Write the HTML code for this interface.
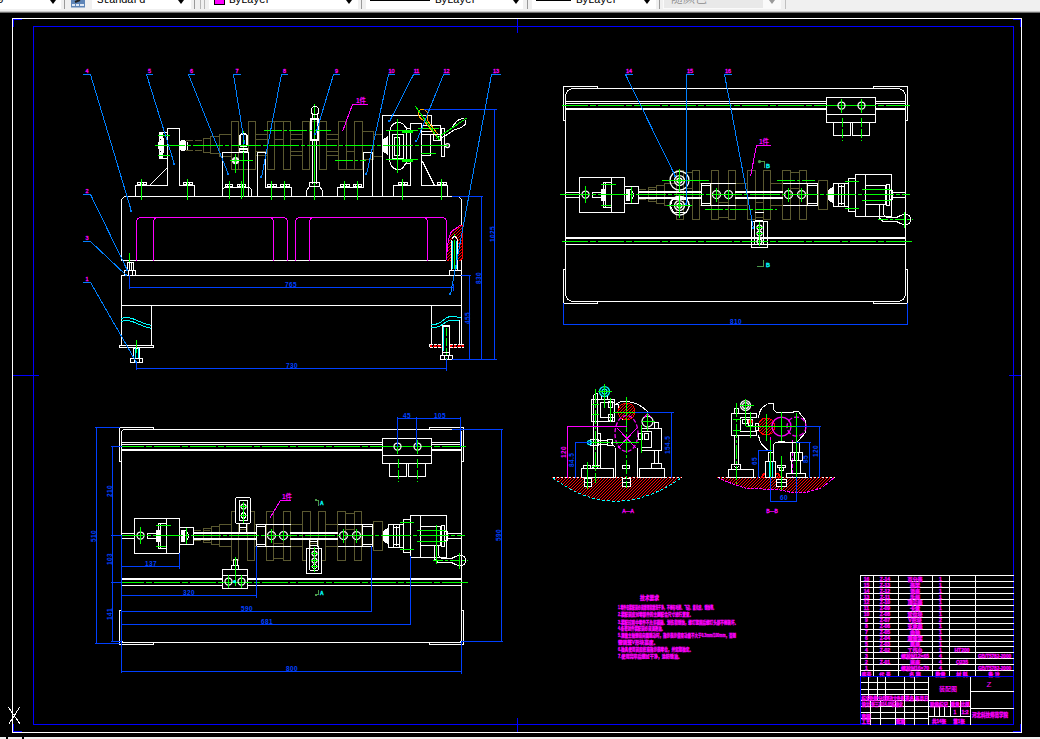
<!DOCTYPE html>
<html lang="zh"><head><meta charset="utf-8"><title>装配图</title>
<style>
html,body{margin:0;padding:0;background:#000;overflow:hidden}
body{width:1040px;height:739px;position:relative;font-family:"Liberation Sans","Noto Sans CJK SC",sans-serif}
#tb{position:absolute;left:0;top:0;width:1040px;height:13px;background:#f0f0f0;overflow:hidden}
#tb .sh1{position:absolute;left:0;top:11px;width:1040px;height:1px;background:#c8c8c8}
#tb .sh2{position:absolute;left:0;top:12px;width:1040px;height:1px;background:#6e6e6e}
.dd{position:absolute;top:0;height:9px;background:#fff;overflow:hidden}
.dd span{position:absolute;top:-7px;font:11px/14px "Liberation Mono","Noto Serif CJK SC",monospace;color:#000;white-space:nowrap;letter-spacing:-.6px}
.dd i{position:absolute;top:0;width:0;height:0;border-left:3.5px solid transparent;border-right:3.5px solid transparent;border-top:4px solid #000}
.sep{position:absolute;top:0;width:1px;height:9px;background:#9a9a9a}
.ln{position:absolute;top:0;height:1px;background:#000}
#bb{position:absolute;left:0;top:737px;width:1040px;height:2px;background:#f0f0f0}
svg{position:absolute;left:0;top:0}
svg text{font-family:"Liberation Sans","Noto Sans CJK SC",sans-serif}
</style></head><body>
<svg width="1040" height="739" viewBox="0 0 1040 739" shape-rendering="crispEdges" fill="none" stroke-width="1">
<defs><pattern id="hr" width="3" height="3" patternUnits="userSpaceOnUse"><rect width="3" height="3" fill="#000"/><path d="M-1 4L4 -1M-1 1L1 -1M2 4L4 2" stroke="#ff0000" stroke-width="1"/></pattern></defs>
<rect x="12.5" y="18.5" width="1009" height="714" stroke="#ffffff" fill="none"/>
<rect x="33.5" y="26.5" width="980" height="698" stroke="#0000ff" fill="none"/>
<line x1="13" y1="375.5" x2="39" y2="375.5" stroke="#0000ff"/>
<line x1="1009" y1="375.5" x2="1021" y2="375.5" stroke="#0000ff"/>
<line x1="517.5" y1="19" x2="517.5" y2="33" stroke="#0000ff"/>
<line x1="517.5" y1="718" x2="517.5" y2="732" stroke="#0000ff"/>
<line x1="13" y1="19.5" x2="22" y2="19.5" stroke="#0000ff"/>
<line x1="13.5" y1="19" x2="13.5" y2="27" stroke="#0000ff"/>
<line x1="1013" y1="19.5" x2="1021" y2="19.5" stroke="#0000ff"/>
<line x1="1020.5" y1="19" x2="1020.5" y2="27" stroke="#0000ff"/>
<line x1="13.5" y1="724" x2="13.5" y2="732" stroke="#0000ff"/>
<line x1="13" y1="731.5" x2="22" y2="731.5" stroke="#0000ff"/>
<line x1="1020.5" y1="724" x2="1020.5" y2="732" stroke="#0000ff"/>
<line x1="1013" y1="731.5" x2="1021" y2="731.5" stroke="#0000ff"/>
<line x1="8.5" y1="707.5" x2="20.5" y2="724.5" stroke="#ffffff"/>
<line x1="19.5" y1="707.5" x2="8.5" y2="724.5" stroke="#ffffff"/>
<line x1="186" y1="140.5" x2="204" y2="140.5" stroke="#5a5830" stroke-dasharray="7 2"/>
<line x1="186" y1="150.5" x2="204" y2="150.5" stroke="#5a5830" stroke-dasharray="7 2"/>
<rect x="203.5" y="138.5" width="7" height="14" stroke="#5a5830" fill="none"/>
<rect x="210.5" y="136.5" width="9" height="17" stroke="#5a5830" fill="none"/>
<rect x="219.5" y="134.5" width="12" height="22" stroke="#5a5830" fill="none"/>
<rect x="231.5" y="121.5" width="7" height="48" stroke="#5a5830" fill="none"/>
<rect x="248.5" y="121.5" width="7" height="48" stroke="#5a5830" fill="none"/>
<rect x="267.5" y="121.5" width="7" height="48" stroke="#5a5830" fill="none"/>
<rect x="283.5" y="121.5" width="7" height="48" stroke="#5a5830" fill="none"/>
<rect x="302.5" y="121.5" width="7" height="48" stroke="#5a5830" fill="none"/>
<rect x="319.5" y="121.5" width="7" height="48" stroke="#5a5830" fill="none"/>
<rect x="338.5" y="121.5" width="8" height="48" stroke="#5a5830" fill="none"/>
<rect x="354.5" y="121.5" width="8" height="48" stroke="#5a5830" fill="none"/>
<line x1="238" y1="151.5" x2="249" y2="151.5" stroke="#5a5830"/>
<line x1="238" y1="169.5" x2="249" y2="169.5" stroke="#5a5830"/>
<line x1="346" y1="151.5" x2="355" y2="151.5" stroke="#5a5830"/>
<line x1="346" y1="169.5" x2="355" y2="169.5" stroke="#5a5830"/>
<line x1="274" y1="121.5" x2="284" y2="121.5" stroke="#5a5830"/>
<line x1="274" y1="139.5" x2="284" y2="139.5" stroke="#5a5830"/>
<line x1="309" y1="121.5" x2="320" y2="121.5" stroke="#5a5830"/>
<line x1="309" y1="139.5" x2="320" y2="139.5" stroke="#5a5830"/>
<line x1="255" y1="134.5" x2="268" y2="134.5" stroke="#5a5830"/>
<line x1="255" y1="139.5" x2="268" y2="139.5" stroke="#5a5830"/>
<line x1="255" y1="151.5" x2="268" y2="151.5" stroke="#5a5830"/>
<line x1="255" y1="155.5" x2="268" y2="155.5" stroke="#5a5830"/>
<line x1="290" y1="134.5" x2="303" y2="134.5" stroke="#5a5830"/>
<line x1="290" y1="139.5" x2="303" y2="139.5" stroke="#5a5830"/>
<line x1="290" y1="151.5" x2="303" y2="151.5" stroke="#5a5830"/>
<line x1="290" y1="155.5" x2="303" y2="155.5" stroke="#5a5830"/>
<line x1="326" y1="134.5" x2="339" y2="134.5" stroke="#5a5830"/>
<line x1="326" y1="139.5" x2="339" y2="139.5" stroke="#5a5830"/>
<line x1="326" y1="151.5" x2="339" y2="151.5" stroke="#5a5830"/>
<line x1="326" y1="155.5" x2="339" y2="155.5" stroke="#5a5830"/>
<rect x="362.5" y="131.5" width="11" height="28" stroke="#5a5830" fill="none"/>
<rect x="373.5" y="134.5" width="9" height="22" stroke="#5a5830" fill="none"/>
<polyline points="121.5,260.5 121.5,199.5 124.5,196.5 458.5,196.5 461.5,199.5 461.5,345.5" stroke="#ffffff" fill="none"/>
<line x1="121" y1="260.5" x2="448" y2="260.5" stroke="#ffffff"/>
<line x1="121" y1="275.5" x2="462" y2="275.5" stroke="#ffffff"/>
<line x1="121.5" y1="275" x2="121.5" y2="346" stroke="#ffffff"/>
<line x1="121" y1="305.5" x2="462" y2="305.5" stroke="#ffffff"/>
<line x1="151.5" y1="305" x2="151.5" y2="346" stroke="#ffffff"/>
<line x1="431.5" y1="305" x2="431.5" y2="346" stroke="#ffffff"/>
<rect x="119.5" y="345.5" width="34" height="2" stroke="#ffffff" fill="none"/>
<path d="M136.5 260.5V222.5Q136.5 217.5 141.5 217.5H282.5Q287.5 217.5 287.5 222.5V260.5" stroke="#ff00ff" fill="none"/>
<path d="M153.5 260.5V222.5Q153.5 217.5 158.5 217.5" stroke="#ff00ff" fill="none"/>
<path d="M273.5 260.5V222.5Q273.5 217.5 268.5 217.5" stroke="#ff00ff" fill="none"/>
<path d="M295.5 260.5V222.5Q295.5 217.5 300.5 217.5H441.5Q446.5 217.5 446.5 222.5V260.5" stroke="#ff00ff" fill="none"/>
<path d="M309.5 260.5V222.5Q309.5 217.5 314.5 217.5" stroke="#ff00ff" fill="none"/>
<path d="M427.5 260.5V222.5Q427.5 217.5 422.5 217.5" stroke="#ff00ff" fill="none"/>
<line x1="129.5" y1="253" x2="129.5" y2="263" stroke="#00ff00"/>
<rect x="127.5" y="262.5" width="6" height="8" stroke="#ffffff" fill="none"/>
<line x1="129.5" y1="262" x2="129.5" y2="271" stroke="#ffffff"/>
<line x1="131.5" y1="262" x2="131.5" y2="271" stroke="#ffffff"/>
<rect x="124.5" y="270.5" width="11" height="5" stroke="#ffffff" fill="none"/>
<line x1="128.5" y1="270" x2="128.5" y2="276" stroke="#ffffff"/>
<line x1="132.5" y1="270" x2="132.5" y2="276" stroke="#ffffff"/>
<path d="M121.5 318.5 Q128 316 136 320 T151.5 325.5" stroke="#00ffff" fill="none"/>
<path d="M121.5 321.5 Q128 319 136 323 T151.5 328.5" stroke="#00ffff" fill="none"/>
<line x1="136.5" y1="340" x2="136.5" y2="353" stroke="#00ff00"/>
<rect x="133.5" y="348.5" width="6" height="10" stroke="#ffffff" fill="none"/>
<line x1="135.5" y1="348" x2="135.5" y2="359" stroke="#00ffff"/>
<line x1="138.5" y1="348" x2="138.5" y2="359" stroke="#00ffff"/>
<rect x="130.5" y="358.5" width="12" height="4" stroke="#ffffff" fill="none"/>
<line x1="134.5" y1="358" x2="134.5" y2="363" stroke="#ffffff"/>
<line x1="139.5" y1="358" x2="139.5" y2="363" stroke="#ffffff"/>
<path d="M446.5 260.5 Q447 245 449.5 236 L451.5 232 L461.5 225 L462.5 226 V258 L460.5 260.5Z" fill="url(#hr)" stroke="#ff0000" stroke-dasharray="2 1"/>
<path d="M446.5 260.5 Q447 245 449.5 236 L451.5 231.5 L461.5 224.5" stroke="#ff00ff" fill="none"/>
<rect x="451.5" y="239.5" width="6" height="31" stroke="#ffffff" fill="#000"/>
<line x1="454.5" y1="234" x2="454.5" y2="269" stroke="#00ff00"/>
<line x1="452.5" y1="241" x2="452.5" y2="269" stroke="#00ffff"/>
<line x1="456.5" y1="241" x2="456.5" y2="269" stroke="#00ffff"/>
<path d="M451.5 239.5 Q454.5 233.5 457.5 239.5" stroke="#ffffff" fill="#000"/>
<rect x="449.5" y="270.5" width="12" height="5" stroke="#ffffff" fill="none"/>
<path d="M431.5 324.5 Q438 325 443 320.5 T452 316.5 L461.5 317.5" stroke="#00ffff" fill="none"/>
<path d="M431.5 327.5 Q438 328 443 324 T452 320.5 L459.5 320.5" stroke="#00ffff" fill="none"/>
<rect x="429.5" y="344.5" width="34" height="3" fill="url(#hr)" stroke="#ffffff" stroke-dasharray="3 1"/>
<line x1="430" y1="345.5" x2="464" y2="345.5" stroke="#ff0000" stroke-dasharray="2 2"/>
<line x1="430" y1="346.5" x2="464" y2="346.5" stroke="#ff0000" stroke-dasharray="2 2"/>
<rect x="442.5" y="325.5" width="7" height="30" stroke="#ffffff" fill="#000"/>
<line x1="442" y1="326.5" x2="450" y2="326.5" stroke="#ffffff"/>
<line x1="443.5" y1="327" x2="443.5" y2="351" stroke="#00ffff"/>
<line x1="446.5" y1="328" x2="446.5" y2="363" stroke="#00ff00" stroke-dasharray="8 2"/>
<line x1="443" y1="352.5" x2="450" y2="352.5" stroke="#ffffff"/>
<rect x="440.5" y="355.5" width="12" height="4" stroke="#ffffff" fill="none"/>
<line x1="444.5" y1="355" x2="444.5" y2="360" stroke="#ffffff"/>
<line x1="448.5" y1="355" x2="448.5" y2="360" stroke="#ffffff"/>
<line x1="459.5" y1="320" x2="459.5" y2="345" stroke="#ffffff"/>
<polyline points="135.5,196.5 135.5,185.5 167.5,185.5 167.5,128.5 179.5,128.5 179.5,185.5 194.5,185.5 194.5,196.5" stroke="#ffffff" fill="none"/>
<line x1="149.5" y1="185.5" x2="167.5" y2="167.5" stroke="#ffffff"/>
<rect x="137.5" y="182.5" width="9" height="2" stroke="#ffffff" fill="none"/>
<line x1="140.5" y1="182" x2="140.5" y2="185" stroke="#ffffff"/>
<line x1="143.5" y1="182" x2="143.5" y2="185" stroke="#ffffff"/>
<rect x="183.5" y="182.5" width="9" height="2" stroke="#ffffff" fill="none"/>
<line x1="186.5" y1="182" x2="186.5" y2="185" stroke="#ffffff"/>
<line x1="189.5" y1="182" x2="189.5" y2="185" stroke="#ffffff"/>
<line x1="141.5" y1="179" x2="141.5" y2="200" stroke="#00ff00"/>
<line x1="187.5" y1="179" x2="187.5" y2="200" stroke="#00ff00"/>
<rect x="159.5" y="132.5" width="8" height="26" stroke="#ffffff" fill="none"/>
<rect x="159.5" y="132.5" width="3" height="6" stroke="#ffffff" fill="#fff"/>
<rect x="159.5" y="152.5" width="3" height="6" stroke="#ffffff" fill="#fff"/>
<rect x="161.5" y="138.5" width="2" height="14" stroke="#ffffff" fill="#fff"/>
<path d="M160.5 140.5 Q155.5 145.5 160.5 150.5Z" fill="#fff" stroke="#fff"/>
<line x1="158" y1="135.5" x2="170" y2="135.5" stroke="#00ff00"/>
<line x1="158" y1="155.5" x2="170" y2="155.5" stroke="#00ff00"/>
<rect x="180.5" y="140.5" width="5" height="10" stroke="#ffffff" fill="#fff" rx="2"/>
<line x1="187.5" y1="142" x2="187.5" y2="150" stroke="#ffffff"/>
<polyline points="222.5,196.5 222.5,152.5 248.5,152.5 248.5,196.5" stroke="#ffffff" fill="none"/>
<polyline points="222.5,196.5 222.5,189.5 224.5,187.5 249.5,187.5 251.5,189.5 251.5,196.5" stroke="#ffffff" fill="none"/>
<rect x="225.5" y="184.5" width="7" height="2" stroke="#ffffff" fill="none"/>
<line x1="227.5" y1="184" x2="227.5" y2="187" stroke="#ffffff"/>
<line x1="229.5" y1="184" x2="229.5" y2="187" stroke="#ffffff"/>
<rect x="237.5" y="184.5" width="8" height="2" stroke="#ffffff" fill="none"/>
<line x1="239.5" y1="184" x2="239.5" y2="187" stroke="#ffffff"/>
<line x1="242.5" y1="184" x2="242.5" y2="187" stroke="#ffffff"/>
<line x1="229.5" y1="181" x2="229.5" y2="199" stroke="#00ff00"/>
<line x1="241.5" y1="181" x2="241.5" y2="199" stroke="#00ff00"/>
<line x1="243.5" y1="131" x2="243.5" y2="197" stroke="#00ff00"/>
<rect x="239.5" y="133.5" width="8" height="13" stroke="#ffffff" fill="none" rx="3"/>
<rect x="240.5" y="134.5" width="6" height="11" stroke="#ffffff" fill="none" rx="2"/>
<rect x="239.5" y="148.5" width="8" height="3" stroke="#ffffff" fill="none"/>
<line x1="239" y1="149.5" x2="248" y2="149.5" stroke="#ffffff"/>
<circle shape-rendering="geometricPrecision" stroke-width="1.25" cx="235.5" cy="160.5" r="3" stroke="#ffffff" fill="none"/>
<circle shape-rendering="geometricPrecision" stroke-width="1.25" cx="235.5" cy="160.5" r="2" stroke="#ffffff" fill="none"/>
<line x1="230" y1="160.5" x2="253" y2="160.5" stroke="#00ff00"/>
<line x1="235.5" y1="154" x2="235.5" y2="173" stroke="#00ff00"/>
<polyline points="257.5,196.5 257.5,152.5 265.5,152.5 265.5,187.5 291.5,187.5 291.5,196.5" stroke="#ffffff" fill="none"/>
<rect x="267.5" y="184.5" width="9" height="2" stroke="#ffffff" fill="none"/>
<line x1="270.5" y1="184" x2="270.5" y2="187" stroke="#ffffff"/>
<line x1="273.5" y1="184" x2="273.5" y2="187" stroke="#ffffff"/>
<rect x="280.5" y="184.5" width="9" height="2" stroke="#ffffff" fill="none"/>
<line x1="283.5" y1="184" x2="283.5" y2="187" stroke="#ffffff"/>
<line x1="286.5" y1="184" x2="286.5" y2="187" stroke="#ffffff"/>
<line x1="271.5" y1="181" x2="271.5" y2="200" stroke="#00ff00"/>
<line x1="284.5" y1="181" x2="284.5" y2="200" stroke="#00ff00"/>
<line x1="314.5" y1="104" x2="314.5" y2="200" stroke="#00ff00"/>
<rect x="311.5" y="106.5" width="7" height="8" stroke="#ffffff" fill="none" rx="3"/>
<line x1="312.5" y1="114" x2="312.5" y2="119" stroke="#ffffff"/>
<line x1="317.5" y1="114" x2="317.5" y2="119" stroke="#ffffff"/>
<rect x="310.5" y="118.5" width="8" height="22" stroke="#ffffff" fill="none"/>
<rect x="311.5" y="119.5" width="6" height="20" stroke="#ffffff" fill="none"/>
<line x1="312.5" y1="140" x2="312.5" y2="184" stroke="#ffffff"/>
<line x1="316.5" y1="140" x2="316.5" y2="184" stroke="#ffffff"/>
<polyline points="306.5,196.5 306.5,190.5 309.5,186.5 309.5,182.5 319.5,182.5 319.5,186.5 322.5,190.5 322.5,196.5" stroke="#ffffff" fill="none"/>
<line x1="309" y1="186.5" x2="320" y2="186.5" stroke="#ffffff"/>
<polyline points="337.5,196.5 337.5,187.5 363.5,187.5 363.5,152.5 372.5,152.5 372.5,196.5" stroke="#ffffff" fill="none"/>
<rect x="340.5" y="184.5" width="9" height="2" stroke="#ffffff" fill="none"/>
<line x1="343.5" y1="184" x2="343.5" y2="187" stroke="#ffffff"/>
<line x1="346.5" y1="184" x2="346.5" y2="187" stroke="#ffffff"/>
<rect x="353.5" y="184.5" width="8" height="2" stroke="#ffffff" fill="none"/>
<line x1="355.5" y1="184" x2="355.5" y2="187" stroke="#ffffff"/>
<line x1="358.5" y1="184" x2="358.5" y2="187" stroke="#ffffff"/>
<line x1="344.5" y1="181" x2="344.5" y2="200" stroke="#00ff00"/>
<line x1="357.5" y1="181" x2="357.5" y2="200" stroke="#00ff00"/>
<polyline points="382.5,196.5 382.5,115.5 431.5,115.5 431.5,125.5" stroke="#ffffff" fill="none"/>
<polyline points="393.5,196.5 393.5,185.5 410.5,185.5 410.5,123.5 421.5,123.5 421.5,185.5 447.5,185.5 447.5,196.5" stroke="#ffffff" fill="none"/>
<rect x="398.5" y="182.5" width="9" height="2" stroke="#ffffff" fill="none"/>
<line x1="401.5" y1="182" x2="401.5" y2="185" stroke="#ffffff"/>
<line x1="404.5" y1="182" x2="404.5" y2="185" stroke="#ffffff"/>
<rect x="437.5" y="182.5" width="9" height="2" stroke="#ffffff" fill="none"/>
<line x1="440.5" y1="182" x2="440.5" y2="185" stroke="#ffffff"/>
<line x1="443.5" y1="182" x2="443.5" y2="185" stroke="#ffffff"/>
<line x1="402.5" y1="179" x2="402.5" y2="200" stroke="#00ff00"/>
<line x1="441.5" y1="179" x2="441.5" y2="200" stroke="#00ff00"/>
<polyline points="421.5,125.5 440.5,125.5 440.5,134.5 421.5,134.5" stroke="#ffffff" fill="none"/>
<polyline points="430.5,134.5 430.5,155.5 421.5,155.5" stroke="#ffffff" fill="none"/>
<line x1="421" y1="131.5" x2="434" y2="131.5" stroke="#ffffff"/>
<line x1="422.5" y1="161.5" x2="434.5" y2="185.5" stroke="#ffffff"/>
<rect x="441.5" y="128.5" width="3" height="28" stroke="#ffffff" fill="none"/>
<circle shape-rendering="geometricPrecision" stroke-width="1.25" cx="447.5" cy="145.5" r="2" stroke="#ffffff" fill="none"/>
<path d="M389.5 135 Q389.5 123 398 122.5 Q403 122.5 404.5 126 L406.5 128 V163 L404.5 165 Q403 169.5 398 169.5 Q389.5 169 389.5 157Z" stroke="#ffffff" fill="none"/>
<rect x="392.5" y="134.5" width="11" height="24" stroke="#ffffff" fill="none"/>
<rect x="394.5" y="137.5" width="5" height="18" stroke="#ffffff" fill="none"/>
<line x1="406" y1="128.5" x2="411" y2="128.5" stroke="#ffffff"/>
<line x1="406" y1="163.5" x2="411" y2="163.5" stroke="#ffffff"/>
<path d="M383.5 139.5 L387.5 137 V154 L383.5 151.5Z" fill="#fff" stroke="#fff"/>
<line x1="397.5" y1="119" x2="397.5" y2="173" stroke="#00ff00"/>
<line x1="386" y1="130.5" x2="418" y2="130.5" stroke="#00ff00"/>
<line x1="386" y1="159.5" x2="418" y2="159.5" stroke="#00ff00"/>
<line x1="402" y1="131.5" x2="413" y2="131.5" stroke="#00ff00" stroke-width="3"/>
<line x1="402" y1="160.5" x2="413" y2="160.5" stroke="#00ff00" stroke-width="3"/>
<line x1="418" y1="128.5" x2="439" y2="128.5" stroke="#00ff00"/>
<line x1="421" y1="153.5" x2="436" y2="153.5" stroke="#00ff00"/>
<path d="M437.5 137.5 L452 128 Q456 120 462 118.5 Q467 119 465.5 124 Q462 128 455 129.5 L439.5 139.5" stroke="#ffffff" fill="none"/>
<line x1="436.5" y1="138.5" x2="467.5" y2="117.5" stroke="#00ff00"/>
<path d="M436.5 136.5 L424 121 Q416.5 116 418.5 111 Q422 107 427 111.5 Q428.5 117 427 120 L438.5 135" stroke="#ffa500" fill="none"/>
<line x1="415.5" y1="106.5" x2="440.5" y2="141.5" stroke="#00ff00"/>
<rect x="433.5" y="134.5" width="7" height="6" stroke="#ffffff" fill="none"/>
<line x1="155" y1="145.5" x2="448" y2="145.5" stroke="#00ff00" stroke-dasharray="30 2 4 2"/>
<line x1="264" y1="130.5" x2="331" y2="130.5" stroke="#00ff00" stroke-dasharray="18 2 3 2"/>
<line x1="335" y1="160.5" x2="366" y2="160.5" stroke="#00ff00" stroke-dasharray="18 2 3 2"/>
<line x1="424" y1="109.5" x2="497" y2="109.5" stroke="#0040ff"/>
<line x1="494.5" y1="109" x2="494.5" y2="360" stroke="#0040ff"/>
<line x1="452" y1="196.5" x2="483" y2="196.5" stroke="#0040ff"/>
<line x1="481.5" y1="196" x2="481.5" y2="360" stroke="#0040ff"/>
<line x1="469.5" y1="275" x2="469.5" y2="360" stroke="#0040ff"/>
<line x1="461" y1="275.5" x2="471" y2="275.5" stroke="#0040ff"/>
<line x1="452" y1="359.5" x2="497" y2="359.5" stroke="#0040ff"/>
<line x1="129" y1="287.5" x2="454" y2="287.5" stroke="#0040ff"/>
<line x1="129.5" y1="275" x2="129.5" y2="289" stroke="#0040ff"/>
<line x1="453.5" y1="284" x2="453.5" y2="291" stroke="#0040ff"/>
<line x1="136" y1="368.5" x2="447" y2="368.5" stroke="#0040ff"/>
<line x1="136.5" y1="362" x2="136.5" y2="370" stroke="#0040ff"/>
<line x1="446.5" y1="359" x2="446.5" y2="371" stroke="#0040ff"/>
<text x="285" y="287" fill="#0040ff" font-size="6.5" font-weight="bold" letter-spacing="0.4">765</text>
<text x="286" y="368" fill="#0040ff" font-size="6.5" font-weight="bold" letter-spacing="0.4">730</text>
<text x="495" y="242" fill="#0040ff" font-size="6.5" transform="rotate(-90 495 242)" font-weight="bold" letter-spacing="0.4">1025</text>
<text x="481" y="284" fill="#0040ff" font-size="6.5" transform="rotate(-90 481 284)" font-weight="bold" letter-spacing="0.4">830</text>
<text x="470" y="324" fill="#0040ff" font-size="6.5" transform="rotate(-90 470 324)" font-weight="bold" letter-spacing="0.4">455</text>
<line x1="83" y1="74.5" x2="91" y2="74.5" stroke="#0080ff"/>
<line x1="90.5" y1="74.5" x2="131.5" y2="211.5" stroke="#0080ff"/>
<rect x="130.5" y="210.5" width="1" height="1" stroke="#0080ff" fill="#0080ff"/>
<text x="87" y="73" fill="#ff00ff" font-size="5.5" text-anchor="middle" stroke="#ff00ff" stroke-width="0.3">4</text>
<line x1="146" y1="74.5" x2="153" y2="74.5" stroke="#0080ff"/>
<line x1="146.5" y1="74.5" x2="174.5" y2="164.5" stroke="#0080ff"/>
<rect x="173.5" y="163.5" width="1" height="1" stroke="#0080ff" fill="#0080ff"/>
<text x="149.5" y="73" fill="#ff00ff" font-size="5.5" text-anchor="middle" stroke="#ff00ff" stroke-width="0.3">5</text>
<line x1="188" y1="74.5" x2="195" y2="74.5" stroke="#0080ff"/>
<line x1="188.5" y1="74.5" x2="228.5" y2="174.5" stroke="#0080ff"/>
<rect x="227.5" y="173.5" width="1" height="1" stroke="#0080ff" fill="#0080ff"/>
<text x="191.5" y="73" fill="#ff00ff" font-size="5.5" text-anchor="middle" stroke="#ff00ff" stroke-width="0.3">6</text>
<line x1="233" y1="74.5" x2="241" y2="74.5" stroke="#0080ff"/>
<line x1="233.5" y1="74.5" x2="244.5" y2="143.5" stroke="#0080ff"/>
<rect x="243.5" y="142.5" width="1" height="1" stroke="#0080ff" fill="#0080ff"/>
<text x="237" y="73" fill="#ff00ff" font-size="5.5" text-anchor="middle" stroke="#ff00ff" stroke-width="0.3">7</text>
<line x1="281" y1="74.5" x2="288" y2="74.5" stroke="#0080ff"/>
<line x1="281.5" y1="74.5" x2="261.5" y2="177.5" stroke="#0080ff"/>
<rect x="260.5" y="176.5" width="1" height="1" stroke="#0080ff" fill="#0080ff"/>
<text x="284.5" y="73" fill="#ff00ff" font-size="5.5" text-anchor="middle" stroke="#ff00ff" stroke-width="0.3">8</text>
<line x1="333" y1="74.5" x2="340" y2="74.5" stroke="#0080ff"/>
<line x1="333.5" y1="74.5" x2="315.5" y2="134.5" stroke="#0080ff"/>
<rect x="314.5" y="133.5" width="1" height="1" stroke="#0080ff" fill="#0080ff"/>
<text x="336.5" y="73" fill="#ff00ff" font-size="5.5" text-anchor="middle" stroke="#ff00ff" stroke-width="0.3">9</text>
<line x1="388" y1="74.5" x2="395" y2="74.5" stroke="#0080ff"/>
<line x1="388.5" y1="74.5" x2="366.5" y2="174.5" stroke="#0080ff"/>
<rect x="365.5" y="173.5" width="1" height="1" stroke="#0080ff" fill="#0080ff"/>
<text x="391.5" y="73" fill="#ff00ff" font-size="5.5" text-anchor="middle" stroke="#ff00ff" stroke-width="0.3">10</text>
<line x1="413" y1="74.5" x2="420" y2="74.5" stroke="#0080ff"/>
<line x1="413.5" y1="74.5" x2="389.5" y2="121.5" stroke="#0080ff"/>
<rect x="388.5" y="120.5" width="1" height="1" stroke="#0080ff" fill="#0080ff"/>
<text x="416.5" y="73" fill="#ff00ff" font-size="5.5" text-anchor="middle" stroke="#ff00ff" stroke-width="0.3">11</text>
<line x1="443" y1="74.5" x2="450" y2="74.5" stroke="#0080ff"/>
<line x1="443.5" y1="74.5" x2="416.5" y2="141.5" stroke="#0080ff"/>
<rect x="415.5" y="140.5" width="1" height="1" stroke="#0080ff" fill="#0080ff"/>
<text x="446.5" y="73" fill="#ff00ff" font-size="5.5" text-anchor="middle" stroke="#ff00ff" stroke-width="0.3">12</text>
<line x1="491" y1="74.5" x2="501" y2="74.5" stroke="#0080ff"/>
<line x1="491.5" y1="74.5" x2="450.5" y2="294.5" stroke="#0080ff"/>
<rect x="449.5" y="293.5" width="1" height="1" stroke="#0080ff" fill="#0080ff"/>
<text x="496" y="73" fill="#ff00ff" font-size="5.5" text-anchor="middle" stroke="#ff00ff" stroke-width="0.3">13</text>
<line x1="83" y1="194.5" x2="91" y2="194.5" stroke="#0080ff"/>
<line x1="90.5" y1="194.5" x2="127.5" y2="270.5" stroke="#0080ff"/>
<rect x="126.5" y="269.5" width="1" height="1" stroke="#0080ff" fill="#0080ff"/>
<text x="87" y="193" fill="#ff00ff" font-size="5.5" text-anchor="middle" stroke="#ff00ff" stroke-width="0.3">2</text>
<line x1="83" y1="241.5" x2="91" y2="241.5" stroke="#0080ff"/>
<line x1="90.5" y1="241.5" x2="126.5" y2="275.5" stroke="#0080ff"/>
<rect x="125.5" y="274.5" width="1" height="1" stroke="#0080ff" fill="#0080ff"/>
<text x="87" y="240" fill="#ff00ff" font-size="5.5" text-anchor="middle" stroke="#ff00ff" stroke-width="0.3">3</text>
<line x1="83" y1="282.5" x2="91" y2="282.5" stroke="#0080ff"/>
<line x1="90.5" y1="282.5" x2="136.5" y2="362.5" stroke="#0080ff"/>
<rect x="135.5" y="361.5" width="1" height="1" stroke="#0080ff" fill="#0080ff"/>
<text x="87" y="281" fill="#ff00ff" font-size="5.5" text-anchor="middle" stroke="#ff00ff" stroke-width="0.3">1</text>
<line x1="352" y1="104.5" x2="368" y2="104.5" stroke="#ff00ff"/>
<line x1="352.5" y1="104.5" x2="342.5" y2="131.5" stroke="#ff00ff"/>
<text x="356" y="103" fill="#ff00ff" font-size="6.5" font-weight="bold">1件</text>
<line x1="639" y1="189.5" x2="657" y2="189.5" stroke="#5a5830" stroke-dasharray="7 2"/>
<line x1="639" y1="199.5" x2="657" y2="199.5" stroke="#5a5830" stroke-dasharray="7 2"/>
<rect x="648.5" y="187.5" width="8" height="14" stroke="#5a5830" fill="none"/>
<rect x="656.5" y="185.5" width="8" height="18" stroke="#5a5830" fill="none"/>
<rect x="664.5" y="183.5" width="12" height="22" stroke="#5a5830" fill="none"/>
<rect x="676.5" y="170.5" width="7" height="49" stroke="#5a5830" fill="none"/>
<rect x="692.5" y="170.5" width="7" height="49" stroke="#5a5830" fill="none"/>
<rect x="711.5" y="170.5" width="7" height="49" stroke="#5a5830" fill="none"/>
<rect x="728.5" y="170.5" width="7" height="49" stroke="#5a5830" fill="none"/>
<rect x="747.5" y="170.5" width="8" height="49" stroke="#5a5830" fill="none"/>
<rect x="763.5" y="170.5" width="7" height="49" stroke="#5a5830" fill="none"/>
<rect x="782.5" y="170.5" width="8" height="49" stroke="#5a5830" fill="none"/>
<rect x="799.5" y="170.5" width="7" height="49" stroke="#5a5830" fill="none"/>
<line x1="683" y1="172.5" x2="693" y2="172.5" stroke="#5a5830"/>
<line x1="683" y1="188.5" x2="693" y2="188.5" stroke="#5a5830"/>
<line x1="790" y1="172.5" x2="800" y2="172.5" stroke="#5a5830"/>
<line x1="790" y1="188.5" x2="800" y2="188.5" stroke="#5a5830"/>
<line x1="718" y1="202.5" x2="729" y2="202.5" stroke="#5a5830"/>
<line x1="718" y1="217.5" x2="729" y2="217.5" stroke="#5a5830"/>
<line x1="755" y1="202.5" x2="764" y2="202.5" stroke="#5a5830"/>
<line x1="755" y1="217.5" x2="764" y2="217.5" stroke="#5a5830"/>
<line x1="699" y1="183.5" x2="712" y2="183.5" stroke="#5a5830"/>
<line x1="699" y1="205.5" x2="712" y2="205.5" stroke="#5a5830"/>
<line x1="735" y1="183.5" x2="748" y2="183.5" stroke="#5a5830"/>
<line x1="735" y1="205.5" x2="748" y2="205.5" stroke="#5a5830"/>
<line x1="770" y1="183.5" x2="783" y2="183.5" stroke="#5a5830"/>
<line x1="770" y1="205.5" x2="783" y2="205.5" stroke="#5a5830"/>
<rect x="818.5" y="180.5" width="9" height="29" stroke="#5a5830" fill="none"/>
<polyline points="597.5,88.5 597.5,86.5 563.5,86.5 563.5,120.5 565.5,120.5" stroke="#ffffff" fill="none"/>
<path d="M565.5 292.5V97.5Q565.5 88.5 574.5 88.5H896.5Q905.5 88.5 905.5 97.5V292.5" stroke="#ffffff" fill="none"/>
<polyline points="873.5,88.5 873.5,86.5 907.5,86.5 907.5,120.5 905.5,120.5" stroke="#ffffff" fill="none"/>
<path d="M565.5 292.5Q565.5 301.5 574.5 301.5H896.5Q905.5 301.5 905.5 292.5" stroke="#ffffff" fill="none"/>
<polyline points="565.5,269.5 563.5,269.5 563.5,303.5 597.5,303.5 597.5,301.5" stroke="#ffffff" fill="none"/>
<polyline points="905.5,269.5 907.5,269.5 907.5,303.5 873.5,303.5 873.5,301.5" stroke="#ffffff" fill="none"/>
<line x1="566" y1="101.5" x2="906" y2="101.5" stroke="#ffffff"/>
<line x1="566" y1="103.5" x2="906" y2="103.5" stroke="#ffffff"/>
<line x1="566" y1="108.5" x2="906" y2="108.5" stroke="#ffffff"/>
<line x1="566" y1="109.5" x2="906" y2="109.5" stroke="#ffffff"/>
<line x1="562" y1="105.5" x2="910" y2="105.5" stroke="#00ff00" stroke-dasharray="26 2 6 2"/>
<line x1="566" y1="237.5" x2="906" y2="237.5" stroke="#ffffff"/>
<line x1="566" y1="238.5" x2="906" y2="238.5" stroke="#ffffff"/>
<line x1="566" y1="244.5" x2="906" y2="244.5" stroke="#ffffff"/>
<line x1="562" y1="241.5" x2="913" y2="241.5" stroke="#00ff00" stroke-dasharray="26 2 6 2"/>
<line x1="639" y1="192.5" x2="702" y2="192.5" stroke="#ffffff"/>
<line x1="639" y1="197.5" x2="702" y2="197.5" stroke="#ffffff"/>
<line x1="735" y1="192.5" x2="783" y2="192.5" stroke="#ffffff"/>
<line x1="735" y1="197.5" x2="783" y2="197.5" stroke="#ffffff"/>
<line x1="566" y1="192.5" x2="580" y2="192.5" stroke="#ffffff"/>
<line x1="566" y1="197.5" x2="580" y2="197.5" stroke="#ffffff"/>
<line x1="891" y1="192.5" x2="906" y2="192.5" stroke="#ffffff"/>
<line x1="891" y1="197.5" x2="906" y2="197.5" stroke="#ffffff"/>
<line x1="639" y1="191.5" x2="702" y2="191.5" stroke="#ffffff"/>
<line x1="735" y1="191.5" x2="783" y2="191.5" stroke="#ffffff"/>
<line x1="639" y1="198.5" x2="702" y2="198.5" stroke="#ffffff"/>
<line x1="735" y1="198.5" x2="783" y2="198.5" stroke="#ffffff"/>
<rect x="579.5" y="177.5" width="45" height="35" stroke="#ffffff" fill="none"/>
<line x1="611.5" y1="177" x2="611.5" y2="213" stroke="#ffffff"/>
<circle shape-rendering="geometricPrecision" stroke-width="1.25" cx="585.5" cy="194.5" r="3.5" stroke="#ffffff" fill="none"/>
<line x1="585" y1="194.5" x2="586" y2="194.5" stroke="#00ff00"/>
<line x1="585.5" y1="186" x2="585.5" y2="203" stroke="#00ff00"/>
<rect x="592.5" y="192.5" width="9" height="5" stroke="#ffffff" fill="none"/>
<polyline points="611.5,182.5 603.5,182.5 603.5,207.5 611.5,207.5" stroke="#ffffff" fill="none"/>
<line x1="605.5" y1="182" x2="605.5" y2="208" stroke="#ffffff"/>
<rect x="601.5" y="189.5" width="3" height="11" stroke="#ffffff" fill="#fff"/>
<line x1="601" y1="184.5" x2="616" y2="184.5" stroke="#00ff00"/>
<line x1="601" y1="205.5" x2="611" y2="205.5" stroke="#00ff00"/>
<polyline points="624.5,186.5 638.5,186.5 638.5,203.5 624.5,203.5" stroke="#ffffff" fill="none"/>
<path d="M630.5 189.5 Q636.5 194.5 630.5 200.5" stroke="#ffffff" fill="none"/>
<rect x="626.5" y="189.5" width="3" height="11" stroke="#ffffff" fill="#fff"/>
<line x1="631.5" y1="187" x2="631.5" y2="203" stroke="#00ff00"/>
<circle shape-rendering="geometricPrecision" stroke-width="1.25" cx="679.5" cy="180.5" r="9.5" stroke="#ffffff" fill="none"/>
<circle shape-rendering="geometricPrecision" stroke-width="1.25" cx="679.5" cy="180.5" r="5" stroke="#ffffff" fill="none"/>
<circle shape-rendering="geometricPrecision" stroke-width="1.25" cx="679.5" cy="180.5" r="2.5" stroke="#ffffff" fill="none"/>
<circle shape-rendering="geometricPrecision" stroke-width="1.25" cx="679.5" cy="180.5" r="1" stroke="#00ff00" fill="#00ff00"/>
<circle shape-rendering="geometricPrecision" stroke-width="1.25" cx="679.5" cy="205.5" r="9.5" stroke="#ffffff" fill="none"/>
<circle shape-rendering="geometricPrecision" stroke-width="1.25" cx="679.5" cy="205.5" r="5" stroke="#ffffff" fill="none"/>
<circle shape-rendering="geometricPrecision" stroke-width="1.25" cx="679.5" cy="205.5" r="2.5" stroke="#ffffff" fill="none"/>
<circle shape-rendering="geometricPrecision" stroke-width="1.25" cx="679.5" cy="205.5" r="1" stroke="#00ff00" fill="#00ff00"/>
<polygon points="672.5,199.5 687.5,199.5 689.5,205.5 686.5,212.5 673.5,212.5 670.5,205.5" stroke="#ffffff" fill="none"/>
<line x1="662" y1="180.5" x2="709" y2="180.5" stroke="#00ff00"/>
<line x1="679.5" y1="169" x2="679.5" y2="192" stroke="#00ff00"/>
<line x1="667" y1="205.5" x2="692" y2="205.5" stroke="#00ff00"/>
<line x1="679.5" y1="195" x2="679.5" y2="218" stroke="#00ff00"/>
<rect x="701.5" y="183.5" width="9" height="22" stroke="#ffffff" fill="none"/>
<line x1="701" y1="185.5" x2="711" y2="185.5" stroke="#ffffff"/>
<line x1="701" y1="203.5" x2="711" y2="203.5" stroke="#ffffff"/>
<line x1="710" y1="183.5" x2="736" y2="183.5" stroke="#ffffff"/>
<line x1="710" y1="205.5" x2="736" y2="205.5" stroke="#ffffff"/>
<line x1="710.5" y1="183" x2="710.5" y2="206" stroke="#ffffff"/>
<circle shape-rendering="geometricPrecision" stroke-width="1.25" cx="716.5" cy="194.5" r="4" stroke="#ffffff" fill="none"/>
<circle shape-rendering="geometricPrecision" stroke-width="1.25" cx="728.5" cy="194.5" r="4" stroke="#ffffff" fill="none"/>
<line x1="716.5" y1="188" x2="716.5" y2="202" stroke="#00ff00"/>
<line x1="728.5" y1="190" x2="728.5" y2="200" stroke="#00ff00"/>
<line x1="783" y1="183.5" x2="808" y2="183.5" stroke="#ffffff"/>
<line x1="783" y1="205.5" x2="808" y2="205.5" stroke="#ffffff"/>
<rect x="807.5" y="183.5" width="10" height="22" stroke="#ffffff" fill="none"/>
<line x1="807" y1="185.5" x2="818" y2="185.5" stroke="#ffffff"/>
<line x1="807" y1="203.5" x2="818" y2="203.5" stroke="#ffffff"/>
<circle shape-rendering="geometricPrecision" stroke-width="1.25" cx="788.5" cy="194.5" r="4" stroke="#ffffff" fill="none"/>
<circle shape-rendering="geometricPrecision" stroke-width="1.25" cx="801.5" cy="194.5" r="4" stroke="#ffffff" fill="none"/>
<line x1="788.5" y1="188" x2="788.5" y2="202" stroke="#00ff00"/>
<line x1="801.5" y1="188" x2="801.5" y2="202" stroke="#00ff00"/>
<line x1="705" y1="209.5" x2="777" y2="209.5" stroke="#00ff00" stroke-dasharray="18 2 3 2"/>
<line x1="777" y1="180.5" x2="815" y2="180.5" stroke="#00ff00" stroke-dasharray="18 2 3 2"/>
<rect x="855.5" y="174.5" width="36" height="42" stroke="#ffffff" fill="none"/>
<line x1="865.5" y1="174" x2="865.5" y2="217" stroke="#ffffff"/>
<polyline points="855.5,178.5 848.5,178.5 848.5,211.5 855.5,211.5" stroke="#ffffff" fill="none"/>
<rect x="833.5" y="183.5" width="15" height="23" stroke="#ffffff" fill="none"/>
<line x1="838.5" y1="183" x2="838.5" y2="207" stroke="#ffffff"/>
<line x1="841.5" y1="185" x2="841.5" y2="205" stroke="#ffffff"/>
<line x1="844.5" y1="183" x2="844.5" y2="207" stroke="#ffffff"/>
<line x1="838" y1="186.5" x2="845" y2="186.5" stroke="#ffffff"/>
<line x1="838" y1="203.5" x2="845" y2="203.5" stroke="#ffffff"/>
<path d="M828.5 190.5 L832.5 187.5 V202.5 L828.5 199.5Z" fill="#fff" stroke="#fff"/>
<polyline points="865.5,185.5 885.5,185.5 885.5,204.5 865.5,204.5" stroke="#ffffff" fill="none"/>
<rect x="886.5" y="184.5" width="3" height="21" stroke="#ffffff" fill="none"/>
<rect x="889.5" y="190.5" width="3" height="9" stroke="#ffffff" fill="none"/>
<line x1="862" y1="189.5" x2="891" y2="189.5" stroke="#00ff00"/>
<line x1="862" y1="200.5" x2="891" y2="200.5" stroke="#00ff00"/>
<line x1="845" y1="181.5" x2="859" y2="181.5" stroke="#00ff00"/>
<line x1="845" y1="208.5" x2="859" y2="208.5" stroke="#00ff00"/>
<path d="M879.5 204.5V215.5Q879.5 221.5 885.5 221.5H896.5" stroke="#ffffff" fill="none"/>
<path d="M883.5 204.5V212.5Q883.5 217.5 888.5 217.5H896.5" stroke="#ffffff" fill="none"/>
<path d="M896.5 217.5 C898.5 216.5 900.5 214.5 905.5 214.5 C908.5 214.5 910.5 216.5 910.5 219.5 C910.5 222.5 908.5 224.5 905.5 224.5 C900.5 224.5 898.5 222.5 896.5 221.5" stroke="#ffffff" fill="none"/>
<line x1="878" y1="219.5" x2="913" y2="219.5" stroke="#00ff00" stroke-dasharray="10 2 3 2"/>
<line x1="904.5" y1="212" x2="904.5" y2="228" stroke="#00ff00"/>
<line x1="560" y1="194.5" x2="910" y2="194.5" stroke="#00ff00" stroke-dasharray="30 2 4 2"/>
<rect x="826.5" y="97.5" width="49" height="25" stroke="#ffffff" fill="#000"/>
<line x1="826" y1="114.5" x2="876" y2="114.5" stroke="#ffffff"/>
<line x1="826" y1="105.5" x2="876" y2="105.5" stroke="#00ff00"/>
<circle shape-rendering="geometricPrecision" stroke-width="1.25" cx="841.5" cy="105.5" r="3.5" stroke="#ffffff" fill="none"/>
<circle shape-rendering="geometricPrecision" stroke-width="1.25" cx="861.5" cy="105.5" r="3.5" stroke="#ffffff" fill="none"/>
<line x1="841.5" y1="99" x2="841.5" y2="113" stroke="#00ff00"/>
<line x1="861.5" y1="99" x2="861.5" y2="113" stroke="#00ff00"/>
<rect x="833.5" y="122.5" width="17" height="13" stroke="#ffffff" fill="none"/>
<rect x="852.5" y="122.5" width="17" height="13" stroke="#ffffff" fill="none"/>
<line x1="842.5" y1="118" x2="842.5" y2="141" stroke="#00ff00" stroke-dasharray="9 2"/>
<line x1="861.5" y1="118" x2="861.5" y2="141" stroke="#00ff00" stroke-dasharray="9 2"/>
<line x1="755" y1="212.5" x2="764" y2="212.5" stroke="#ffffff"/>
<rect x="751.5" y="221.5" width="16" height="26" stroke="#ffffff" fill="#000"/>
<rect x="754.5" y="220.5" width="9" height="24" stroke="#ffffff" fill="none" rx="2"/>
<line x1="751" y1="237.5" x2="768" y2="237.5" stroke="#ffffff"/>
<line x1="751" y1="238.5" x2="768" y2="238.5" stroke="#ffffff"/>
<line x1="751" y1="244.5" x2="768" y2="244.5" stroke="#ffffff"/>
<line x1="751" y1="241.5" x2="768" y2="241.5" stroke="#00ff00"/>
<circle shape-rendering="geometricPrecision" stroke-width="1.25" cx="759.5" cy="227.5" r="2.5" stroke="#ffffff" fill="none"/>
<circle shape-rendering="geometricPrecision" stroke-width="1.25" cx="759.5" cy="233.5" r="2.5" stroke="#ffffff" fill="none"/>
<circle shape-rendering="geometricPrecision" stroke-width="1.25" cx="759.5" cy="241.5" r="2.5" stroke="#ffffff" fill="none"/>
<line x1="759.5" y1="222" x2="759.5" y2="246" stroke="#00ff00"/>
<line x1="756" y1="227.5" x2="763" y2="227.5" stroke="#00ff00"/>
<line x1="756" y1="233.5" x2="763" y2="233.5" stroke="#00ff00"/>
<polyline points="757.5,161.5 764.5,161.5 764.5,167.5" stroke="#4a9a4a" fill="none"/>
<circle shape-rendering="geometricPrecision" stroke-width="1.25" cx="759.5" cy="161.5" r="1" stroke="#4a9a4a" fill="#4a9a4a"/>
<text x="766" y="168" fill="#00ffff" font-size="5.5" font-weight="bold" stroke="#00ffff" stroke-width="0.3">B</text>
<polyline points="756.5,266.5 763.5,266.5 763.5,259.5" stroke="#4a9a4a" fill="none"/>
<text x="766" y="267" fill="#00ffff" font-size="5.5" font-weight="bold" stroke="#00ffff" stroke-width="0.3">B</text>
<line x1="625" y1="74.5" x2="633" y2="74.5" stroke="#0080ff"/>
<line x1="625.5" y1="74.5" x2="675.5" y2="176.5" stroke="#0080ff"/>
<rect x="674.5" y="175.5" width="1" height="1" stroke="#0080ff" fill="#0080ff"/>
<text x="629" y="73" fill="#ff00ff" font-size="5.5" text-anchor="middle" stroke="#ff00ff" stroke-width="0.3">14</text>
<line x1="686" y1="74.5" x2="694" y2="74.5" stroke="#0080ff"/>
<line x1="686.5" y1="74.5" x2="686.5" y2="204.5" stroke="#0080ff"/>
<rect x="685.5" y="203.5" width="1" height="1" stroke="#0080ff" fill="#0080ff"/>
<text x="690" y="73" fill="#ff00ff" font-size="5.5" text-anchor="middle" stroke="#ff00ff" stroke-width="0.3">15</text>
<line x1="724" y1="74.5" x2="732" y2="74.5" stroke="#0080ff"/>
<line x1="724.5" y1="74.5" x2="753.5" y2="228.5" stroke="#0080ff"/>
<rect x="752.5" y="227.5" width="1" height="1" stroke="#0080ff" fill="#0080ff"/>
<text x="728" y="73" fill="#ff00ff" font-size="5.5" text-anchor="middle" stroke="#ff00ff" stroke-width="0.3">16</text>
<line x1="756" y1="145.5" x2="771" y2="145.5" stroke="#ff00ff"/>
<line x1="756.5" y1="145.5" x2="750.5" y2="176.5" stroke="#ff00ff"/>
<text x="759" y="144" fill="#ff00ff" font-size="6.5" font-weight="bold">1件</text>
<line x1="563.5" y1="303" x2="563.5" y2="325" stroke="#0040ff"/>
<line x1="907.5" y1="303" x2="907.5" y2="325" stroke="#0040ff"/>
<line x1="563" y1="324.5" x2="908" y2="324.5" stroke="#0040ff"/>
<text x="730" y="324" fill="#0040ff" font-size="6.5" font-weight="bold" letter-spacing="0.4">810</text>
<line x1="194" y1="530.5" x2="212" y2="530.5" stroke="#5a5830" stroke-dasharray="7 2"/>
<line x1="194" y1="540.5" x2="212" y2="540.5" stroke="#5a5830" stroke-dasharray="7 2"/>
<rect x="203.5" y="528.5" width="8" height="14" stroke="#5a5830" fill="none"/>
<rect x="211.5" y="526.5" width="8" height="18" stroke="#5a5830" fill="none"/>
<rect x="219.5" y="524.5" width="12" height="22" stroke="#5a5830" fill="none"/>
<rect x="231.5" y="511.5" width="7" height="49" stroke="#5a5830" fill="none"/>
<rect x="247.5" y="511.5" width="7" height="49" stroke="#5a5830" fill="none"/>
<rect x="266.5" y="511.5" width="7" height="49" stroke="#5a5830" fill="none"/>
<rect x="283.5" y="511.5" width="7" height="49" stroke="#5a5830" fill="none"/>
<rect x="302.5" y="511.5" width="8" height="49" stroke="#5a5830" fill="none"/>
<rect x="318.5" y="511.5" width="7" height="49" stroke="#5a5830" fill="none"/>
<rect x="337.5" y="511.5" width="8" height="49" stroke="#5a5830" fill="none"/>
<rect x="354.5" y="511.5" width="7" height="49" stroke="#5a5830" fill="none"/>
<line x1="238" y1="513.5" x2="248" y2="513.5" stroke="#5a5830"/>
<line x1="238" y1="529.5" x2="248" y2="529.5" stroke="#5a5830"/>
<line x1="345" y1="513.5" x2="355" y2="513.5" stroke="#5a5830"/>
<line x1="345" y1="529.5" x2="355" y2="529.5" stroke="#5a5830"/>
<line x1="273" y1="543.5" x2="284" y2="543.5" stroke="#5a5830"/>
<line x1="273" y1="558.5" x2="284" y2="558.5" stroke="#5a5830"/>
<line x1="310" y1="543.5" x2="319" y2="543.5" stroke="#5a5830"/>
<line x1="310" y1="558.5" x2="319" y2="558.5" stroke="#5a5830"/>
<line x1="254" y1="524.5" x2="267" y2="524.5" stroke="#5a5830"/>
<line x1="254" y1="546.5" x2="267" y2="546.5" stroke="#5a5830"/>
<line x1="290" y1="524.5" x2="303" y2="524.5" stroke="#5a5830"/>
<line x1="290" y1="546.5" x2="303" y2="546.5" stroke="#5a5830"/>
<line x1="325" y1="524.5" x2="338" y2="524.5" stroke="#5a5830"/>
<line x1="325" y1="546.5" x2="338" y2="546.5" stroke="#5a5830"/>
<rect x="373.5" y="521.5" width="9" height="29" stroke="#5a5830" fill="none"/>
<polyline points="153.5,429.5 153.5,427.5 119.5,427.5 119.5,461.5 121.5,461.5" stroke="#ffffff" fill="none"/>
<path d="M121.5 639.5V432.5Q121.5 429.5 124.5 429.5H458.5Q461.5 429.5 461.5 432.5V639.5" stroke="#ffffff" fill="none"/>
<polyline points="429.5,429.5 429.5,427.5 463.5,427.5 463.5,461.5 461.5,461.5" stroke="#ffffff" fill="none"/>
<path d="M121.5 639.5Q121.5 642.5 124.5 642.5H458.5Q461.5 642.5 461.5 639.5" stroke="#ffffff" fill="none"/>
<polyline points="121.5,610.5 119.5,610.5 119.5,644.5 153.5,644.5 153.5,642.5" stroke="#ffffff" fill="none"/>
<polyline points="461.5,610.5 463.5,610.5 463.5,644.5 429.5,644.5 429.5,642.5" stroke="#ffffff" fill="none"/>
<line x1="122" y1="442.5" x2="462" y2="442.5" stroke="#ffffff"/>
<line x1="122" y1="444.5" x2="462" y2="444.5" stroke="#ffffff"/>
<line x1="122" y1="449.5" x2="462" y2="449.5" stroke="#ffffff"/>
<line x1="122" y1="450.5" x2="462" y2="450.5" stroke="#ffffff"/>
<line x1="118" y1="446.5" x2="466" y2="446.5" stroke="#00ff00" stroke-dasharray="26 2 6 2"/>
<line x1="122" y1="578.5" x2="462" y2="578.5" stroke="#ffffff"/>
<line x1="122" y1="579.5" x2="462" y2="579.5" stroke="#ffffff"/>
<line x1="122" y1="585.5" x2="462" y2="585.5" stroke="#ffffff"/>
<line x1="118" y1="582.5" x2="469" y2="582.5" stroke="#00ff00" stroke-dasharray="26 2 6 2"/>
<line x1="194" y1="533.5" x2="257" y2="533.5" stroke="#ffffff"/>
<line x1="194" y1="538.5" x2="257" y2="538.5" stroke="#ffffff"/>
<line x1="290" y1="533.5" x2="338" y2="533.5" stroke="#ffffff"/>
<line x1="290" y1="538.5" x2="338" y2="538.5" stroke="#ffffff"/>
<line x1="122" y1="533.5" x2="135" y2="533.5" stroke="#ffffff"/>
<line x1="122" y1="538.5" x2="135" y2="538.5" stroke="#ffffff"/>
<line x1="446" y1="533.5" x2="462" y2="533.5" stroke="#ffffff"/>
<line x1="446" y1="538.5" x2="462" y2="538.5" stroke="#ffffff"/>
<line x1="194" y1="532.5" x2="257" y2="532.5" stroke="#ffffff"/>
<line x1="290" y1="532.5" x2="338" y2="532.5" stroke="#ffffff"/>
<line x1="194" y1="539.5" x2="257" y2="539.5" stroke="#ffffff"/>
<line x1="290" y1="539.5" x2="338" y2="539.5" stroke="#ffffff"/>
<rect x="134.5" y="518.5" width="45" height="35" stroke="#ffffff" fill="none"/>
<line x1="166.5" y1="518" x2="166.5" y2="554" stroke="#ffffff"/>
<circle shape-rendering="geometricPrecision" stroke-width="1.25" cx="140.5" cy="535.5" r="3.5" stroke="#ffffff" fill="none"/>
<line x1="140" y1="535.5" x2="141" y2="535.5" stroke="#00ff00"/>
<line x1="140.5" y1="527" x2="140.5" y2="544" stroke="#00ff00"/>
<rect x="147.5" y="533.5" width="9" height="5" stroke="#ffffff" fill="none"/>
<polyline points="166.5,523.5 158.5,523.5 158.5,548.5 166.5,548.5" stroke="#ffffff" fill="none"/>
<line x1="160.5" y1="523" x2="160.5" y2="549" stroke="#ffffff"/>
<rect x="156.5" y="530.5" width="3" height="11" stroke="#ffffff" fill="#fff"/>
<line x1="156" y1="525.5" x2="171" y2="525.5" stroke="#00ff00"/>
<line x1="156" y1="546.5" x2="166" y2="546.5" stroke="#00ff00"/>
<polyline points="179.5,527.5 193.5,527.5 193.5,544.5 179.5,544.5" stroke="#ffffff" fill="none"/>
<path d="M185.5 530.5 Q191.5 535.5 185.5 541.5" stroke="#ffffff" fill="none"/>
<rect x="181.5" y="530.5" width="3" height="11" stroke="#ffffff" fill="#fff"/>
<line x1="186.5" y1="528" x2="186.5" y2="544" stroke="#00ff00"/>
<rect x="256.5" y="524.5" width="9" height="22" stroke="#ffffff" fill="none"/>
<line x1="256" y1="526.5" x2="266" y2="526.5" stroke="#ffffff"/>
<line x1="256" y1="544.5" x2="266" y2="544.5" stroke="#ffffff"/>
<line x1="265" y1="524.5" x2="291" y2="524.5" stroke="#ffffff"/>
<line x1="265" y1="546.5" x2="291" y2="546.5" stroke="#ffffff"/>
<line x1="265.5" y1="524" x2="265.5" y2="547" stroke="#ffffff"/>
<circle shape-rendering="geometricPrecision" stroke-width="1.25" cx="271.5" cy="535.5" r="4" stroke="#ffffff" fill="none"/>
<circle shape-rendering="geometricPrecision" stroke-width="1.25" cx="283.5" cy="535.5" r="4" stroke="#ffffff" fill="none"/>
<line x1="271.5" y1="529" x2="271.5" y2="543" stroke="#00ff00"/>
<line x1="283.5" y1="531" x2="283.5" y2="541" stroke="#00ff00"/>
<line x1="338" y1="524.5" x2="363" y2="524.5" stroke="#ffffff"/>
<line x1="338" y1="546.5" x2="363" y2="546.5" stroke="#ffffff"/>
<rect x="362.5" y="524.5" width="10" height="22" stroke="#ffffff" fill="none"/>
<line x1="362" y1="526.5" x2="373" y2="526.5" stroke="#ffffff"/>
<line x1="362" y1="544.5" x2="373" y2="544.5" stroke="#ffffff"/>
<circle shape-rendering="geometricPrecision" stroke-width="1.25" cx="343.5" cy="535.5" r="4" stroke="#ffffff" fill="none"/>
<circle shape-rendering="geometricPrecision" stroke-width="1.25" cx="356.5" cy="535.5" r="4" stroke="#ffffff" fill="none"/>
<line x1="343.5" y1="529" x2="343.5" y2="543" stroke="#00ff00"/>
<line x1="356.5" y1="529" x2="356.5" y2="543" stroke="#00ff00"/>
<rect x="410.5" y="515.5" width="36" height="42" stroke="#ffffff" fill="none"/>
<line x1="420.5" y1="515" x2="420.5" y2="558" stroke="#ffffff"/>
<polyline points="410.5,519.5 403.5,519.5 403.5,552.5 410.5,552.5" stroke="#ffffff" fill="none"/>
<rect x="388.5" y="524.5" width="15" height="23" stroke="#ffffff" fill="none"/>
<line x1="393.5" y1="524" x2="393.5" y2="548" stroke="#ffffff"/>
<line x1="396.5" y1="526" x2="396.5" y2="546" stroke="#ffffff"/>
<line x1="399.5" y1="524" x2="399.5" y2="548" stroke="#ffffff"/>
<line x1="393" y1="527.5" x2="400" y2="527.5" stroke="#ffffff"/>
<line x1="393" y1="544.5" x2="400" y2="544.5" stroke="#ffffff"/>
<path d="M383.5 531.5 L387.5 528.5 V543.5 L383.5 540.5Z" fill="#fff" stroke="#fff"/>
<polyline points="420.5,526.5 440.5,526.5 440.5,545.5 420.5,545.5" stroke="#ffffff" fill="none"/>
<rect x="441.5" y="525.5" width="3" height="21" stroke="#ffffff" fill="none"/>
<rect x="444.5" y="531.5" width="3" height="9" stroke="#ffffff" fill="none"/>
<line x1="417" y1="530.5" x2="446" y2="530.5" stroke="#00ff00"/>
<line x1="417" y1="541.5" x2="446" y2="541.5" stroke="#00ff00"/>
<line x1="400" y1="522.5" x2="414" y2="522.5" stroke="#00ff00"/>
<line x1="400" y1="549.5" x2="414" y2="549.5" stroke="#00ff00"/>
<path d="M434.5 545.5V556.5Q434.5 562.5 440.5 562.5H451.5" stroke="#ffffff" fill="none"/>
<path d="M438.5 545.5V553.5Q438.5 558.5 443.5 558.5H451.5" stroke="#ffffff" fill="none"/>
<path d="M451.5 558.5 C453.5 557.5 455.5 555.5 460.5 555.5 C463.5 555.5 465.5 557.5 465.5 560.5 C465.5 563.5 463.5 565.5 460.5 565.5 C455.5 565.5 453.5 563.5 451.5 562.5" stroke="#ffffff" fill="none"/>
<line x1="433" y1="560.5" x2="468" y2="560.5" stroke="#00ff00" stroke-dasharray="10 2 3 2"/>
<line x1="459.5" y1="553" x2="459.5" y2="569" stroke="#00ff00"/>
<line x1="115" y1="535.5" x2="465" y2="535.5" stroke="#00ff00" stroke-dasharray="30 2 4 2"/>
<rect x="382.5" y="438.5" width="49" height="25" stroke="#ffffff" fill="#000"/>
<line x1="382" y1="455.5" x2="432" y2="455.5" stroke="#ffffff"/>
<line x1="382" y1="446.5" x2="432" y2="446.5" stroke="#00ff00"/>
<circle shape-rendering="geometricPrecision" stroke-width="1.25" cx="397.5" cy="446.5" r="3.5" stroke="#ffffff" fill="none"/>
<circle shape-rendering="geometricPrecision" stroke-width="1.25" cx="417.5" cy="446.5" r="3.5" stroke="#ffffff" fill="none"/>
<line x1="397.5" y1="440" x2="397.5" y2="454" stroke="#00ff00"/>
<line x1="417.5" y1="440" x2="417.5" y2="454" stroke="#00ff00"/>
<rect x="389.5" y="463.5" width="17" height="13" stroke="#ffffff" fill="none"/>
<rect x="408.5" y="463.5" width="17" height="13" stroke="#ffffff" fill="none"/>
<line x1="398.5" y1="459" x2="398.5" y2="482" stroke="#00ff00" stroke-dasharray="9 2"/>
<line x1="417.5" y1="459" x2="417.5" y2="482" stroke="#00ff00" stroke-dasharray="9 2"/>
<line x1="436.5" y1="525" x2="436.5" y2="564" stroke="#00ff00"/>
<rect x="235.5" y="497.5" width="15" height="26" stroke="#ffffff" fill="#000" rx="2"/>
<rect x="239.5" y="500.5" width="8" height="20" stroke="#ffffff" fill="none"/>
<circle shape-rendering="geometricPrecision" stroke-width="1.25" cx="243.5" cy="506.5" r="2.5" stroke="#ffffff" fill="none"/>
<polygon points="243.5,511.5 246.5,515.5 243.5,519.5 240.5,515.5" stroke="#ffffff" fill="none"/>
<line x1="243.5" y1="502" x2="243.5" y2="523" stroke="#00ff00"/>
<line x1="240" y1="506.5" x2="247" y2="506.5" stroke="#00ff00"/>
<line x1="240" y1="515.5" x2="247" y2="515.5" stroke="#00ff00"/>
<line x1="239.5" y1="524" x2="239.5" y2="533" stroke="#ffffff"/>
<line x1="246.5" y1="524" x2="246.5" y2="533" stroke="#ffffff"/>
<line x1="239" y1="527.5" x2="247" y2="527.5" stroke="#ffffff"/>
<rect x="306.5" y="548.5" width="15" height="25" stroke="#ffffff" fill="#000"/>
<rect x="309.5" y="545.5" width="9" height="25" stroke="#ffffff" fill="none" rx="2"/>
<line x1="309.5" y1="539" x2="309.5" y2="547" stroke="#ffffff"/>
<line x1="317.5" y1="539" x2="317.5" y2="547" stroke="#ffffff"/>
<line x1="309" y1="541.5" x2="318" y2="541.5" stroke="#ffffff"/>
<circle shape-rendering="geometricPrecision" stroke-width="1.25" cx="314.5" cy="553.5" r="2.5" stroke="#ffffff" fill="none"/>
<circle shape-rendering="geometricPrecision" stroke-width="1.25" cx="314.5" cy="560.5" r="2.5" stroke="#ffffff" fill="none"/>
<polygon points="314.5,563.5 317.5,566.5 314.5,569.5 311.5,566.5" stroke="#ffffff" fill="none"/>
<line x1="314.5" y1="547" x2="314.5" y2="572" stroke="#00ff00"/>
<line x1="311" y1="553.5" x2="318" y2="553.5" stroke="#00ff00"/>
<line x1="311" y1="560.5" x2="318" y2="560.5" stroke="#00ff00"/>
<line x1="311" y1="566.5" x2="318" y2="566.5" stroke="#00ff00"/>
<rect x="222.5" y="569.5" width="25" height="19" stroke="#ffffff" fill="#000"/>
<line x1="222" y1="575.5" x2="248" y2="575.5" stroke="#ffffff"/>
<line x1="222" y1="582.5" x2="248" y2="582.5" stroke="#00ff00"/>
<circle shape-rendering="geometricPrecision" stroke-width="1.25" cx="228.5" cy="581.5" r="3.5" stroke="#ffffff" fill="none"/>
<circle shape-rendering="geometricPrecision" stroke-width="1.25" cx="241.5" cy="581.5" r="3.5" stroke="#ffffff" fill="none"/>
<line x1="228.5" y1="575" x2="228.5" y2="588" stroke="#00ff00"/>
<line x1="241.5" y1="575" x2="241.5" y2="588" stroke="#00ff00"/>
<rect x="231.5" y="565.5" width="7" height="4" stroke="#ffffff" fill="none"/>
<rect x="233.5" y="559.5" width="4" height="6" stroke="#ffffff" fill="none"/>
<line x1="235.5" y1="557" x2="235.5" y2="586" stroke="#00ff00"/>
<circle shape-rendering="geometricPrecision" stroke-width="1.25" cx="234.5" cy="581.5" r="1" stroke="#00ffff" fill="#00ffff"/>
<line x1="280" y1="500.5" x2="291" y2="500.5" stroke="#ff00ff"/>
<line x1="280.5" y1="500.5" x2="269.5" y2="518.5" stroke="#ff00ff"/>
<text x="282" y="499" fill="#ff00ff" font-size="6.5" font-weight="bold">1件</text>
<polyline points="314.5,500.5 318.5,500.5 318.5,505.5" stroke="#4a9a4a" fill="none"/>
<line x1="315" y1="499.5" x2="317" y2="499.5" stroke="#4a9a4a"/>
<text x="320" y="505" fill="#00ffff" font-size="5" font-weight="bold" stroke="#00ffff" stroke-width="0.3">A</text>
<polyline points="318.5,589.5 318.5,594.5 314.5,594.5" stroke="#4a9a4a" fill="none"/>
<line x1="315" y1="595.5" x2="317" y2="595.5" stroke="#4a9a4a"/>
<text x="320" y="595" fill="#00ffff" font-size="5" font-weight="bold" stroke="#00ffff" stroke-width="0.3">A</text>
<line x1="95" y1="427.5" x2="120" y2="427.5" stroke="#0040ff"/>
<line x1="96.5" y1="427" x2="96.5" y2="644" stroke="#0040ff"/>
<line x1="95" y1="643.5" x2="120" y2="643.5" stroke="#0040ff"/>
<line x1="111" y1="446.5" x2="122" y2="446.5" stroke="#0040ff"/>
<line x1="112.5" y1="446" x2="112.5" y2="642" stroke="#0040ff"/>
<line x1="111" y1="535.5" x2="122" y2="535.5" stroke="#0040ff"/>
<line x1="111" y1="582.5" x2="122" y2="582.5" stroke="#0040ff"/>
<line x1="111" y1="641.5" x2="122" y2="641.5" stroke="#0040ff"/>
<line x1="121.5" y1="535" x2="121.5" y2="673" stroke="#0040ff"/>
<line x1="121" y1="566.5" x2="180" y2="566.5" stroke="#0040ff"/>
<line x1="179.5" y1="553" x2="179.5" y2="569" stroke="#0040ff"/>
<line x1="121" y1="595.5" x2="257" y2="595.5" stroke="#0040ff"/>
<line x1="256.5" y1="546" x2="256.5" y2="598" stroke="#0040ff"/>
<line x1="121" y1="611.5" x2="372" y2="611.5" stroke="#0040ff"/>
<line x1="371.5" y1="546" x2="371.5" y2="612" stroke="#0040ff"/>
<line x1="121" y1="624.5" x2="411" y2="624.5" stroke="#0040ff"/>
<line x1="410.5" y1="556" x2="410.5" y2="625" stroke="#0040ff"/>
<line x1="121" y1="671.5" x2="462" y2="671.5" stroke="#0040ff"/>
<line x1="461.5" y1="641" x2="461.5" y2="674" stroke="#0040ff"/>
<line x1="397" y1="418.5" x2="461" y2="418.5" stroke="#0040ff"/>
<line x1="397.5" y1="417" x2="397.5" y2="447" stroke="#0040ff"/>
<line x1="416.5" y1="417" x2="416.5" y2="447" stroke="#0040ff"/>
<line x1="460.5" y1="417" x2="460.5" y2="447" stroke="#0040ff"/>
<line x1="452" y1="429.5" x2="503" y2="429.5" stroke="#0040ff"/>
<line x1="501.5" y1="429" x2="501.5" y2="642" stroke="#0040ff"/>
<line x1="461" y1="641.5" x2="503" y2="641.5" stroke="#0040ff"/>
<text x="96" y="542" fill="#0040ff" font-size="6.5" transform="rotate(-90 96 542)" font-weight="bold" letter-spacing="0.4">510</text>
<text x="112" y="497" fill="#0040ff" font-size="6.5" transform="rotate(-90 112 497)" font-weight="bold" letter-spacing="0.4">210</text>
<text x="112" y="565" fill="#0040ff" font-size="6.5" transform="rotate(-90 112 565)" font-weight="bold" letter-spacing="0.4">103</text>
<text x="112" y="620" fill="#0040ff" font-size="6.5" transform="rotate(-90 112 620)" font-weight="bold" letter-spacing="0.4">141</text>
<text x="145" y="566" fill="#0040ff" font-size="6.5" font-weight="bold" letter-spacing="0.4">137</text>
<text x="183" y="595" fill="#0040ff" font-size="6.5" font-weight="bold" letter-spacing="0.4">320</text>
<text x="241" y="611" fill="#0040ff" font-size="6.5" font-weight="bold" letter-spacing="0.4">590</text>
<text x="261" y="624" fill="#0040ff" font-size="6.5" font-weight="bold" letter-spacing="0.4">681</text>
<text x="286" y="671" fill="#0040ff" font-size="6.5" font-weight="bold" letter-spacing="0.4">800</text>
<text x="403" y="418" fill="#0040ff" font-size="6.5" font-weight="bold" letter-spacing="0.4">45</text>
<text x="434" y="418" fill="#0040ff" font-size="6.5" font-weight="bold" letter-spacing="0.4">105</text>
<text x="501" y="541" fill="#0040ff" font-size="6.5" transform="rotate(-90 501 541)" font-weight="bold" letter-spacing="0.4">590</text>
<path d="M552.5 477.5 H681.5 Q615 525 552.5 477.5Z" fill="url(#hr)" stroke="none"/>
<path d="M552.5 477.5 Q615 525 681.5 477.5" stroke="#00ffff" fill="none" stroke-dasharray="3 2"/>
<line x1="552" y1="477.5" x2="682" y2="477.5" stroke="#ffffff" stroke-dasharray="3 1"/>
<line x1="552" y1="477.5" x2="682" y2="477.5" stroke="#ff0000" stroke-dasharray="1 3"/>
<path d="M614.5 404.5 L621.5 401.5 A33.5 33.5 0 0 1 648.5 412.5 M611.5 442.5 Q612.5 445.5 615.5 447.5" stroke="#ffffff" fill="none"/>
<polyline points="614.5,404.5 618.5,404.5 618.5,412.5 614.5,412.5" stroke="#ffffff" fill="none"/>
<path d="M618.5 414 L622.5 419.5 L625.5 417" stroke="#ffffff" fill="none"/>
<circle cx="626.5" cy="411.5" r="8.5" fill="url(#hr)" stroke="#ff0000"/>
<ellipse shape-rendering="geometricPrecision" stroke-width="1.25" cx="626.5" cy="433.5" rx="11.5" ry="18" stroke="#ff00ff" fill="none" stroke-dasharray="4 2"/>
<line x1="617.5" y1="428.5" x2="636.5" y2="448.5" stroke="#ff00ff"/>
<line x1="636.5" y1="428.5" x2="617.5" y2="448.5" stroke="#ff00ff"/>
<line x1="620" y1="442.5" x2="633" y2="442.5" stroke="#ff00ff"/>
<polyline points="593.5,468.5 593.5,395.5 595.5,393.5 597.5,393.5 597.5,468.5" stroke="#ffffff" fill="none"/>
<polyline points="597.5,433.5 600.5,433.5 600.5,468.5" stroke="#ffffff" fill="none"/>
<rect x="591.5" y="399.5" width="23" height="22" stroke="#ffffff" fill="none"/>
<polyline points="614.5,402.5 600.5,402.5 600.5,417.5 614.5,417.5" stroke="#ffffff" fill="none"/>
<rect x="608.5" y="401.5" width="4" height="6" stroke="#ffffff" fill="none"/>
<rect x="608.5" y="414.5" width="4" height="6" stroke="#ffffff" fill="none"/>
<circle shape-rendering="geometricPrecision" stroke-width="1.25" cx="604.5" cy="391.5" r="5" stroke="#00ffff" fill="none"/>
<circle shape-rendering="geometricPrecision" stroke-width="1.25" cx="604.5" cy="391.5" r="2.5" stroke="#00ffff" fill="none"/>
<line x1="601.5" y1="396" x2="601.5" y2="400" stroke="#ffffff"/>
<line x1="607.5" y1="396" x2="607.5" y2="400" stroke="#ffffff"/>
<rect x="590.5" y="439.5" width="8" height="6" stroke="#ffffff" fill="none"/>
<rect x="598.5" y="440.5" width="9" height="4" stroke="#ffffff" fill="none"/>
<rect x="607.5" y="439.5" width="5" height="6" stroke="#ffffff" fill="none"/>
<circle shape-rendering="geometricPrecision" stroke-width="1.25" cx="589.5" cy="442.5" r="2" stroke="#00ffff" fill="none"/>
<rect x="581.5" y="468.5" width="32" height="9" stroke="#ffffff" fill="none"/>
<rect x="583.5" y="465.5" width="7" height="3" stroke="#ffffff" fill="none"/>
<rect x="592.5" y="465.5" width="8" height="3" stroke="#ffffff" fill="none"/>
<polyline points="615.5,477.5 615.5,447.5" stroke="#ffffff" fill="none"/>
<polyline points="637.5,477.5 637.5,447.5" stroke="#ffffff" fill="none"/>
<rect x="622.5" y="465.5" width="7" height="3" stroke="#ffffff" fill="none"/>
<rect x="584.5" y="478.5" width="7" height="8" stroke="#ffffff" fill="#000"/>
<line x1="584" y1="482.5" x2="592" y2="482.5" stroke="#ffffff"/>
<rect x="622.5" y="478.5" width="8" height="8" stroke="#ffffff" fill="#000"/>
<line x1="622" y1="482.5" x2="631" y2="482.5" stroke="#ffffff"/>
<circle shape-rendering="geometricPrecision" stroke-width="1.25" cx="647.5" cy="421.5" r="5.5" stroke="#ffffff" fill="none"/>
<rect x="654.5" y="422.5" width="4" height="6" stroke="#ffffff" fill="none"/>
<rect x="641.5" y="428.5" width="20" height="22" stroke="#ffffff" fill="none"/>
<polyline points="641.5,431.5 651.5,431.5 651.5,447.5 641.5,447.5" stroke="#ffffff" fill="none"/>
<rect x="638.5" y="433.5" width="4" height="6" stroke="#ffffff" fill="none"/>
<rect x="644.5" y="433.5" width="4" height="6" stroke="#ffffff" fill="none"/>
<line x1="654.5" y1="450" x2="654.5" y2="464" stroke="#ffffff"/>
<line x1="658.5" y1="450" x2="658.5" y2="464" stroke="#ffffff"/>
<rect x="651.5" y="463.5" width="10" height="5" stroke="#ffffff" fill="none"/>
<rect x="639.5" y="468.5" width="25" height="9" stroke="#ffffff" fill="none"/>
<path d="M644.5 417 Q647.5 412 651 417" stroke="#ff00ff" fill="none"/>
<line x1="595.5" y1="389" x2="595.5" y2="483" stroke="#00ff00" stroke-dasharray="14 2 3 2"/>
<line x1="626.5" y1="397" x2="626.5" y2="488" stroke="#00ff00" stroke-dasharray="14 2 3 2"/>
<line x1="587.5" y1="462" x2="587.5" y2="489" stroke="#00ff00"/>
<line x1="587" y1="442.5" x2="610" y2="442.5" stroke="#00ff00"/>
<line x1="613" y1="442.5" x2="639" y2="442.5" stroke="#00ff00"/>
<line x1="604.5" y1="384" x2="604.5" y2="408" stroke="#00ff00"/>
<line x1="598" y1="391.5" x2="612" y2="391.5" stroke="#00ff00"/>
<line x1="610.5" y1="398" x2="610.5" y2="422" stroke="#00ff00"/>
<line x1="647.5" y1="412" x2="647.5" y2="431" stroke="#00ff00"/>
<line x1="642" y1="421.5" x2="655" y2="421.5" stroke="#00ff00"/>
<line x1="641.5" y1="425" x2="641.5" y2="453" stroke="#00ff00"/>
<line x1="613" y1="412.5" x2="636" y2="412.5" stroke="#00ff00"/>
<line x1="592" y1="404.5" x2="599" y2="404.5" stroke="#00ff00"/>
<line x1="592" y1="414.5" x2="599" y2="414.5" stroke="#00ff00"/>
<line x1="592" y1="466.5" x2="599" y2="466.5" stroke="#00ff00"/>
<line x1="567" y1="426.5" x2="627" y2="426.5" stroke="#ff00ff"/>
<line x1="567.5" y1="426" x2="567.5" y2="478" stroke="#ff00ff"/>
<line x1="575" y1="442.5" x2="591" y2="442.5" stroke="#0040ff"/>
<line x1="575.5" y1="442" x2="575.5" y2="478" stroke="#0040ff"/>
<line x1="635" y1="412.5" x2="674" y2="412.5" stroke="#0040ff"/>
<line x1="671.5" y1="412" x2="671.5" y2="478" stroke="#0040ff"/>
<text x="566" y="458" fill="#ff00ff" font-size="6.5" transform="rotate(-90 566 458)" font-weight="bold" letter-spacing="0.4">120</text>
<text x="574" y="467" fill="#0040ff" font-size="6.5" transform="rotate(-90 574 467)" font-weight="bold" letter-spacing="0.4">84.5</text>
<text x="670" y="454" fill="#0040ff" font-size="6.5" transform="rotate(-90 670 454)" font-weight="bold" letter-spacing="0.4">154.5</text>
<text x="628" y="513" fill="#ff00ff" font-size="5" text-anchor="middle" stroke="#ff00ff" stroke-width="0.3">A—A</text>
<path d="M717.5 477.5 H834.5 L822.5 487.5 L807.5 492 H789.5 L777.5 489.5 L746.5 488.5 L727.5 482Z" fill="url(#hr)" stroke="none"/>
<path d="M717.5 477.5 L727.5 482 L746.5 488.5 L777.5 489.5 L789.5 492 H807.5 L822.5 487.5 L834.5 477.5" stroke="#ff00ff" fill="none" stroke-dasharray="3 1"/>
<line x1="717" y1="477.5" x2="835" y2="477.5" stroke="#ffffff" stroke-dasharray="3 1"/>
<line x1="717" y1="477.5" x2="835" y2="477.5" stroke="#ff0000" stroke-dasharray="1 3"/>
<path d="M767.5 403.5 H773.5 V409.5 L776.5 412.5 H793.5 V411.5 H798.5 L805.5 420.5 V432.5 L798.5 440.5 L796.5 442.5 H775.5 Q773.5 444 773.5 447 V456 M767.5 403.5 L761.5 408.5 Q759 412 758.5 418 M758.5 435.5 Q759.5 441.5 762 444.5 L767.5 450" stroke="#ffffff" fill="none"/>
<rect x="778.5" y="441.5" width="6" height="1" stroke="#ffffff" fill="#fff"/>
<circle cx="766.5" cy="426.5" r="8.5" fill="url(#hr)" stroke="#ff0000"/>
<rect x="755.5" y="423.5" width="3" height="7" stroke="#ffffff" fill="none"/>
<circle shape-rendering="geometricPrecision" stroke-width="1.25" cx="781.5" cy="426.5" r="9.5" stroke="#ff00ff" fill="none"/>
<circle shape-rendering="geometricPrecision" stroke-width="1.25" cx="796.5" cy="426.5" r="9.5" stroke="#ff00ff" fill="none" stroke-dasharray="5 2"/>
<line x1="770.5" y1="437" x2="770.5" y2="478" stroke="#ff00ff" stroke-dasharray="4 2"/>
<line x1="792.5" y1="440" x2="792.5" y2="478" stroke="#ff00ff" stroke-dasharray="4 2"/>
<rect x="728.5" y="469.5" width="25" height="8" stroke="#ffffff" fill="none"/>
<rect x="731.5" y="464.5" width="9" height="5" stroke="#ffffff" fill="none"/>
<line x1="734.5" y1="435" x2="734.5" y2="465" stroke="#ffffff"/>
<line x1="738.5" y1="435" x2="738.5" y2="465" stroke="#ffffff"/>
<polyline points="734.5,413.5 734.5,408.5 738.5,408.5 738.5,413.5" stroke="#ffffff" fill="none"/>
<polyline points="756.5,417.5 756.5,413.5 731.5,413.5 731.5,435.5 756.5,435.5 756.5,431.5 740.5,431.5 740.5,417.5 756.5,417.5" stroke="#ffffff" fill="none"/>
<rect x="742.5" y="419.5" width="5" height="4" stroke="#ffffff" fill="none"/>
<rect x="748.5" y="419.5" width="4" height="6" stroke="#ffffff" fill="none"/>
<circle shape-rendering="geometricPrecision" stroke-width="1.25" cx="750.5" cy="421.5" r="1.5" stroke="#ff0000" fill="#ff0000"/>
<circle shape-rendering="geometricPrecision" stroke-width="1.25" cx="745.5" cy="405.5" r="5" stroke="#ffffff" fill="none"/>
<circle shape-rendering="geometricPrecision" stroke-width="1.25" cx="745.5" cy="405.5" r="3" stroke="#ffffff" fill="none"/>
<path d="M734.5 466.5 L736.5 468.5 L738.5 466.5" stroke="#ffffff" fill="none"/>
<path d="M761.5 477.5 L763.5 473.5 H778.5 L780.5 477.5Z" fill="url(#hr)" stroke="#ff0000"/>
<rect x="765.5" y="461.5" width="10" height="16" stroke="#ffffff" fill="#000"/>
<rect x="768.5" y="452.5" width="5" height="9" stroke="#ffffff" fill="none"/>
<line x1="769.5" y1="462" x2="769.5" y2="477" stroke="#00ffff"/>
<line x1="772.5" y1="462" x2="772.5" y2="477" stroke="#00ffff"/>
<rect x="777.5" y="465.5" width="8" height="2" stroke="#ffffff" fill="none"/>
<rect x="779.5" y="467.5" width="4" height="3" stroke="#ffffff" fill="none"/>
<rect x="776.5" y="479.5" width="10" height="7" stroke="#ffffff" fill="#000"/>
<line x1="776" y1="482.5" x2="787" y2="482.5" stroke="#ffffff"/>
<rect x="792.5" y="442.5" width="7" height="10" stroke="#ffffff" fill="none"/>
<rect x="790.5" y="452.5" width="12" height="8" stroke="#ffffff" fill="none"/>
<line x1="794.5" y1="452" x2="794.5" y2="461" stroke="#ffffff"/>
<line x1="798.5" y1="452" x2="798.5" y2="461" stroke="#ffffff"/>
<rect x="791.5" y="460.5" width="9" height="13" stroke="#ffffff" fill="none"/>
<rect x="786.5" y="473.5" width="19" height="4" stroke="#ffffff" fill="none"/>
<line x1="746" y1="426.5" x2="797" y2="426.5" stroke="#00ff00"/>
<line x1="766.5" y1="414" x2="766.5" y2="441" stroke="#00ff00"/>
<line x1="781.5" y1="412" x2="781.5" y2="441" stroke="#00ff00"/>
<line x1="796.5" y1="413" x2="796.5" y2="482" stroke="#00ff00"/>
<line x1="736.5" y1="403" x2="736.5" y2="484" stroke="#00ff00" stroke-dasharray="14 2 3 2"/>
<line x1="745.5" y1="399" x2="745.5" y2="426" stroke="#00ff00"/>
<line x1="750.5" y1="412" x2="750.5" y2="438" stroke="#00ff00"/>
<line x1="740" y1="405.5" x2="754" y2="405.5" stroke="#00ff00"/>
<line x1="733" y1="419.5" x2="741" y2="419.5" stroke="#00ff00"/>
<line x1="733" y1="430.5" x2="741" y2="430.5" stroke="#00ff00"/>
<line x1="770.5" y1="440" x2="770.5" y2="482" stroke="#00ff00"/>
<line x1="781.5" y1="456" x2="781.5" y2="490" stroke="#00ff00"/>
<line x1="796" y1="426.5" x2="821" y2="426.5" stroke="#0040ff"/>
<line x1="819.5" y1="426" x2="819.5" y2="478" stroke="#0040ff"/>
<line x1="796" y1="442.5" x2="811" y2="442.5" stroke="#0040ff"/>
<line x1="809.5" y1="442" x2="809.5" y2="478" stroke="#0040ff"/>
<line x1="758" y1="450.5" x2="772" y2="450.5" stroke="#0040ff"/>
<line x1="758.5" y1="450" x2="758.5" y2="478" stroke="#0040ff"/>
<line x1="770.5" y1="477" x2="770.5" y2="502" stroke="#0040ff"/>
<line x1="796.5" y1="477" x2="796.5" y2="502" stroke="#0040ff"/>
<line x1="770" y1="501.5" x2="797" y2="501.5" stroke="#0040ff"/>
<text x="757" y="465" fill="#0040ff" font-size="6.5" transform="rotate(-90 757 465)" font-weight="bold" letter-spacing="0.4">65</text>
<text x="808" y="463" fill="#0040ff" font-size="6.5" transform="rotate(-90 808 463)" font-weight="bold" letter-spacing="0.4">85</text>
<text x="818" y="457" fill="#0040ff" font-size="6.5" transform="rotate(-90 818 457)" font-weight="bold" letter-spacing="0.4">120</text>
<text x="780" y="500" fill="#0040ff" font-size="6.5" font-weight="bold" letter-spacing="0.4">60</text>
<text x="772" y="513" fill="#ff00ff" font-size="5" text-anchor="middle" stroke="#ff00ff" stroke-width="0.3">B—B</text>
<text x="640" y="599.5" fill="#ff00ff" font-size="5.5" font-weight="bold" stroke="#ff00ff" stroke-width="0.3" textLength="19" lengthAdjust="spacingAndGlyphs">技术要求</text>
<text x="618" y="608.5" fill="#ff00ff" font-size="5" font-weight="bold" stroke="#ff00ff" stroke-width="0.3" textLength="98" lengthAdjust="spacingAndGlyphs">1.零件在装配前必须清理和清洗干净，不得有毛刺、飞边、氧化皮、锈蚀等。</text>
<text x="618" y="616" fill="#ff00ff" font-size="5" font-weight="bold" stroke="#ff00ff" stroke-width="0.3" textLength="75" lengthAdjust="spacingAndGlyphs">2.装配前应对零部件的主要配合尺寸进行复查。</text>
<text x="618" y="623.5" fill="#ff00ff" font-size="5" font-weight="bold" stroke="#ff00ff" stroke-width="0.3" textLength="120" lengthAdjust="spacingAndGlyphs">3.装配过程中零件不允许磕碰、划伤和锈蚀，螺钉紧固后螺钉头部不得损坏。</text>
<text x="618" y="630" fill="#ff00ff" font-size="5" font-weight="bold" stroke="#ff00ff" stroke-width="0.3" textLength="47" lengthAdjust="spacingAndGlyphs">4.各密封件装配前必须浸透油。</text>
<text x="618" y="637" fill="#ff00ff" font-size="5" font-weight="bold" stroke="#ff00ff" stroke-width="0.3" textLength="118" lengthAdjust="spacingAndGlyphs">5.测量主轴颈径向圆跳动时，指示表示值变动量不大于0.3mm/100mm，否则</text>
<text x="618" y="644" fill="#ff00ff" font-size="5" font-weight="bold" stroke="#ff00ff" stroke-width="0.3" textLength="40" lengthAdjust="spacingAndGlyphs">需调整V形块高度。</text>
<text x="618" y="650.5" fill="#ff00ff" font-size="5" font-weight="bold" stroke="#ff00ff" stroke-width="0.3" textLength="75" lengthAdjust="spacingAndGlyphs">6.检具使用前应校准指示表零位，并定期检定。</text>
<text x="618" y="658" fill="#ff00ff" font-size="5" font-weight="bold" stroke="#ff00ff" stroke-width="0.3" textLength="64" lengthAdjust="spacingAndGlyphs">7.使用完毕后擦拭干净，涂防锈油。</text>
<line x1="860" y1="575.5" x2="1014" y2="575.5" stroke="#ffffff"/>
<line x1="860" y1="581.5" x2="1014" y2="581.5" stroke="#ffffff"/>
<line x1="860" y1="587.5" x2="1014" y2="587.5" stroke="#ffffff"/>
<line x1="860" y1="593.5" x2="1014" y2="593.5" stroke="#ffffff"/>
<line x1="860" y1="599.5" x2="1014" y2="599.5" stroke="#ffffff"/>
<line x1="860" y1="605.5" x2="1014" y2="605.5" stroke="#ffffff"/>
<line x1="860" y1="611.5" x2="1014" y2="611.5" stroke="#ffffff"/>
<line x1="860" y1="617.5" x2="1014" y2="617.5" stroke="#ffffff"/>
<line x1="860" y1="623.5" x2="1014" y2="623.5" stroke="#ffffff"/>
<line x1="860" y1="629.5" x2="1014" y2="629.5" stroke="#ffffff"/>
<line x1="860" y1="635.5" x2="1014" y2="635.5" stroke="#ffffff"/>
<line x1="860" y1="641.5" x2="1014" y2="641.5" stroke="#ffffff"/>
<line x1="860" y1="646.5" x2="1014" y2="646.5" stroke="#ffffff"/>
<line x1="860" y1="652.5" x2="1014" y2="652.5" stroke="#ffffff"/>
<line x1="860" y1="658.5" x2="1014" y2="658.5" stroke="#ffffff"/>
<line x1="860" y1="664.5" x2="1014" y2="664.5" stroke="#ffffff"/>
<line x1="860" y1="670.5" x2="1014" y2="670.5" stroke="#ffffff"/>
<line x1="860.5" y1="575" x2="860.5" y2="677" stroke="#ffffff"/>
<line x1="873.5" y1="575" x2="873.5" y2="677" stroke="#ffffff"/>
<line x1="898.5" y1="575" x2="898.5" y2="677" stroke="#ffffff"/>
<line x1="932.5" y1="575" x2="932.5" y2="677" stroke="#ffffff"/>
<line x1="949.5" y1="575" x2="949.5" y2="677" stroke="#ffffff"/>
<line x1="975.5" y1="575" x2="975.5" y2="677" stroke="#ffffff"/>
<text x="866.5" y="580.6" fill="#ff00ff" font-size="5" text-anchor="middle" font-weight="bold" stroke="#ff00ff" stroke-width="0.3">16</text>
<text x="885" y="580.6" fill="#ff00ff" font-size="5" text-anchor="middle" font-weight="bold" stroke="#ff00ff" stroke-width="0.3">Z-14</text>
<text x="915" y="580.6" fill="#ff00ff" font-size="5" text-anchor="middle" font-weight="bold" stroke="#ff00ff" stroke-width="0.3">百分表</text>
<text x="940.5" y="580.6" fill="#ff00ff" font-size="5" text-anchor="middle" font-weight="bold" stroke="#ff00ff" stroke-width="0.3">1</text>
<text x="866.5" y="586.6" fill="#ff00ff" font-size="5" text-anchor="middle" font-weight="bold" stroke="#ff00ff" stroke-width="0.3">15</text>
<text x="885" y="586.6" fill="#ff00ff" font-size="5" text-anchor="middle" font-weight="bold" stroke="#ff00ff" stroke-width="0.3">Z-13</text>
<text x="915" y="586.6" fill="#ff00ff" font-size="5" text-anchor="middle" font-weight="bold" stroke="#ff00ff" stroke-width="0.3">表架</text>
<text x="940.5" y="586.6" fill="#ff00ff" font-size="5" text-anchor="middle" font-weight="bold" stroke="#ff00ff" stroke-width="0.3">1</text>
<text x="866.5" y="592.5" fill="#ff00ff" font-size="5" text-anchor="middle" font-weight="bold" stroke="#ff00ff" stroke-width="0.3">14</text>
<text x="885" y="592.5" fill="#ff00ff" font-size="5" text-anchor="middle" font-weight="bold" stroke="#ff00ff" stroke-width="0.3">Z-12</text>
<text x="915" y="592.5" fill="#ff00ff" font-size="5" text-anchor="middle" font-weight="bold" stroke="#ff00ff" stroke-width="0.3">滑座</text>
<text x="940.5" y="592.5" fill="#ff00ff" font-size="5" text-anchor="middle" font-weight="bold" stroke="#ff00ff" stroke-width="0.3">1</text>
<text x="866.5" y="598.5" fill="#ff00ff" font-size="5" text-anchor="middle" font-weight="bold" stroke="#ff00ff" stroke-width="0.3">13</text>
<text x="885" y="598.5" fill="#ff00ff" font-size="5" text-anchor="middle" font-weight="bold" stroke="#ff00ff" stroke-width="0.3">Z-11</text>
<text x="915" y="598.5" fill="#ff00ff" font-size="5" text-anchor="middle" font-weight="bold" stroke="#ff00ff" stroke-width="0.3">手柄</text>
<text x="940.5" y="598.5" fill="#ff00ff" font-size="5" text-anchor="middle" font-weight="bold" stroke="#ff00ff" stroke-width="0.3">1</text>
<text x="866.5" y="604.4" fill="#ff00ff" font-size="5" text-anchor="middle" font-weight="bold" stroke="#ff00ff" stroke-width="0.3">12</text>
<text x="885" y="604.4" fill="#ff00ff" font-size="5" text-anchor="middle" font-weight="bold" stroke="#ff00ff" stroke-width="0.3">Z-10</text>
<text x="915" y="604.4" fill="#ff00ff" font-size="5" text-anchor="middle" font-weight="bold" stroke="#ff00ff" stroke-width="0.3">顶尖座</text>
<text x="940.5" y="604.4" fill="#ff00ff" font-size="5" text-anchor="middle" font-weight="bold" stroke="#ff00ff" stroke-width="0.3">1</text>
<text x="866.5" y="610.3" fill="#ff00ff" font-size="5" text-anchor="middle" font-weight="bold" stroke="#ff00ff" stroke-width="0.3">11</text>
<text x="885" y="610.3" fill="#ff00ff" font-size="5" text-anchor="middle" font-weight="bold" stroke="#ff00ff" stroke-width="0.3">Z-09</text>
<text x="915" y="610.3" fill="#ff00ff" font-size="5" text-anchor="middle" font-weight="bold" stroke="#ff00ff" stroke-width="0.3">卡盘</text>
<text x="940.5" y="610.3" fill="#ff00ff" font-size="5" text-anchor="middle" font-weight="bold" stroke="#ff00ff" stroke-width="0.3">1</text>
<text x="866.5" y="616.3" fill="#ff00ff" font-size="5" text-anchor="middle" font-weight="bold" stroke="#ff00ff" stroke-width="0.3">10</text>
<text x="885" y="616.3" fill="#ff00ff" font-size="5" text-anchor="middle" font-weight="bold" stroke="#ff00ff" stroke-width="0.3">Z-08</text>
<text x="915" y="616.3" fill="#ff00ff" font-size="5" text-anchor="middle" font-weight="bold" stroke="#ff00ff" stroke-width="0.3">定位块</text>
<text x="940.5" y="616.3" fill="#ff00ff" font-size="5" text-anchor="middle" font-weight="bold" stroke="#ff00ff" stroke-width="0.3">1</text>
<text x="866.5" y="622.2" fill="#ff00ff" font-size="5" text-anchor="middle" font-weight="bold" stroke="#ff00ff" stroke-width="0.3">9</text>
<text x="885" y="622.2" fill="#ff00ff" font-size="5" text-anchor="middle" font-weight="bold" stroke="#ff00ff" stroke-width="0.3">Z-07</text>
<text x="915" y="622.2" fill="#ff00ff" font-size="5" text-anchor="middle" font-weight="bold" stroke="#ff00ff" stroke-width="0.3">V形块</text>
<text x="940.5" y="622.2" fill="#ff00ff" font-size="5" text-anchor="middle" font-weight="bold" stroke="#ff00ff" stroke-width="0.3">2</text>
<text x="866.5" y="628.2" fill="#ff00ff" font-size="5" text-anchor="middle" font-weight="bold" stroke="#ff00ff" stroke-width="0.3">8</text>
<text x="885" y="628.2" fill="#ff00ff" font-size="5" text-anchor="middle" font-weight="bold" stroke="#ff00ff" stroke-width="0.3">Z-06</text>
<text x="915" y="628.2" fill="#ff00ff" font-size="5" text-anchor="middle" font-weight="bold" stroke="#ff00ff" stroke-width="0.3">支承座</text>
<text x="940.5" y="628.2" fill="#ff00ff" font-size="5" text-anchor="middle" font-weight="bold" stroke="#ff00ff" stroke-width="0.3">1</text>
<text x="866.5" y="634.1" fill="#ff00ff" font-size="5" text-anchor="middle" font-weight="bold" stroke="#ff00ff" stroke-width="0.3">7</text>
<text x="885" y="634.1" fill="#ff00ff" font-size="5" text-anchor="middle" font-weight="bold" stroke="#ff00ff" stroke-width="0.3">Z-05</text>
<text x="915" y="634.1" fill="#ff00ff" font-size="5" text-anchor="middle" font-weight="bold" stroke="#ff00ff" stroke-width="0.3">曲轴</text>
<text x="940.5" y="634.1" fill="#ff00ff" font-size="5" text-anchor="middle" font-weight="bold" stroke="#ff00ff" stroke-width="0.3">1</text>
<text x="866.5" y="640" fill="#ff00ff" font-size="5" text-anchor="middle" font-weight="bold" stroke="#ff00ff" stroke-width="0.3">6</text>
<text x="885" y="640" fill="#ff00ff" font-size="5" text-anchor="middle" font-weight="bold" stroke="#ff00ff" stroke-width="0.3">Z-04</text>
<text x="915" y="640" fill="#ff00ff" font-size="5" text-anchor="middle" font-weight="bold" stroke="#ff00ff" stroke-width="0.3">测量架</text>
<text x="940.5" y="640" fill="#ff00ff" font-size="5" text-anchor="middle" font-weight="bold" stroke="#ff00ff" stroke-width="0.3">1</text>
<text x="866.5" y="646" fill="#ff00ff" font-size="5" text-anchor="middle" font-weight="bold" stroke="#ff00ff" stroke-width="0.3">5</text>
<text x="885" y="646" fill="#ff00ff" font-size="5" text-anchor="middle" font-weight="bold" stroke="#ff00ff" stroke-width="0.3">Z-03</text>
<text x="915" y="646" fill="#ff00ff" font-size="5" text-anchor="middle" font-weight="bold" stroke="#ff00ff" stroke-width="0.3">尾座</text>
<text x="940.5" y="646" fill="#ff00ff" font-size="5" text-anchor="middle" font-weight="bold" stroke="#ff00ff" stroke-width="0.3">1</text>
<text x="866.5" y="651.9" fill="#ff00ff" font-size="5" text-anchor="middle" font-weight="bold" stroke="#ff00ff" stroke-width="0.3">4</text>
<text x="885" y="651.9" fill="#ff00ff" font-size="5" text-anchor="middle" font-weight="bold" stroke="#ff00ff" stroke-width="0.3">Z-02</text>
<text x="915" y="651.9" fill="#ff00ff" font-size="5" text-anchor="middle" font-weight="bold" stroke="#ff00ff" stroke-width="0.3">工作台</text>
<text x="940.5" y="651.9" fill="#ff00ff" font-size="5" text-anchor="middle" font-weight="bold" stroke="#ff00ff" stroke-width="0.3">1</text>
<text x="962" y="651.9" fill="#ff00ff" font-size="5" text-anchor="middle" font-weight="bold" stroke="#ff00ff" stroke-width="0.3">HT200</text>
<text x="866.5" y="657.9" fill="#ff00ff" font-size="5" text-anchor="middle" font-weight="bold" stroke="#ff00ff" stroke-width="0.3">3</text>
<text x="915" y="657.9" fill="#ff00ff" font-size="5" text-anchor="middle" font-weight="bold" stroke="#ff00ff" stroke-width="0.3">螺栓M12×65</text>
<text x="940.5" y="657.9" fill="#ff00ff" font-size="5" text-anchor="middle" font-weight="bold" stroke="#ff00ff" stroke-width="0.3">4</text>
<text x="978" y="657.9" fill="#ff00ff" font-size="5" font-weight="bold" stroke="#ff00ff" stroke-width="0.3" textLength="33" lengthAdjust="spacingAndGlyphs">GB/T5782-2000</text>
<text x="866.5" y="663.8" fill="#ff00ff" font-size="5" text-anchor="middle" font-weight="bold" stroke="#ff00ff" stroke-width="0.3">2</text>
<text x="885" y="663.8" fill="#ff00ff" font-size="5" text-anchor="middle" font-weight="bold" stroke="#ff00ff" stroke-width="0.3">Z-01</text>
<text x="915" y="663.8" fill="#ff00ff" font-size="5" text-anchor="middle" font-weight="bold" stroke="#ff00ff" stroke-width="0.3">底座</text>
<text x="940.5" y="663.8" fill="#ff00ff" font-size="5" text-anchor="middle" font-weight="bold" stroke="#ff00ff" stroke-width="0.3">4</text>
<text x="962" y="663.8" fill="#ff00ff" font-size="5" text-anchor="middle" font-weight="bold" stroke="#ff00ff" stroke-width="0.3">Q235</text>
<text x="866.5" y="669.7" fill="#ff00ff" font-size="5" text-anchor="middle" font-weight="bold" stroke="#ff00ff" stroke-width="0.3">1</text>
<text x="915" y="669.7" fill="#ff00ff" font-size="5" text-anchor="middle" font-weight="bold" stroke="#ff00ff" stroke-width="0.3">螺栓M16×70</text>
<text x="940.5" y="669.7" fill="#ff00ff" font-size="5" text-anchor="middle" font-weight="bold" stroke="#ff00ff" stroke-width="0.3">4</text>
<text x="978" y="669.7" fill="#ff00ff" font-size="5" font-weight="bold" stroke="#ff00ff" stroke-width="0.3" textLength="33" lengthAdjust="spacingAndGlyphs">GB/T5782-2000</text>
<text x="866.5" y="675.7" fill="#ff00ff" font-size="5" text-anchor="middle" font-weight="bold" stroke="#ff00ff" stroke-width="0.3">序号</text>
<text x="885" y="675.7" fill="#ff00ff" font-size="5" text-anchor="middle" font-weight="bold" stroke="#ff00ff" stroke-width="0.3">代 号</text>
<text x="915" y="675.7" fill="#ff00ff" font-size="5" text-anchor="middle" font-weight="bold" stroke="#ff00ff" stroke-width="0.3">名    称</text>
<text x="940.5" y="675.7" fill="#ff00ff" font-size="5" text-anchor="middle" font-weight="bold" stroke="#ff00ff" stroke-width="0.3">数量</text>
<text x="962" y="675.7" fill="#ff00ff" font-size="5" text-anchor="middle" font-weight="bold" stroke="#ff00ff" stroke-width="0.3">材 料</text>
<text x="994" y="675.7" fill="#ff00ff" font-size="5" text-anchor="middle" font-weight="bold" stroke="#ff00ff" stroke-width="0.3">备   注</text>
<line x1="860" y1="676.5" x2="1014" y2="676.5" stroke="#0000ff"/>
<line x1="860.5" y1="676" x2="860.5" y2="725" stroke="#0000ff"/>
<line x1="861" y1="682.5" x2="929" y2="682.5" stroke="#ffffff"/>
<line x1="861" y1="689.5" x2="929" y2="689.5" stroke="#ffffff"/>
<line x1="861" y1="694.5" x2="929" y2="694.5" stroke="#ffffff"/>
<line x1="861" y1="700.5" x2="929" y2="700.5" stroke="#ffffff"/>
<line x1="861" y1="706.5" x2="929" y2="706.5" stroke="#ffffff"/>
<line x1="861" y1="712.5" x2="929" y2="712.5" stroke="#ffffff"/>
<line x1="861" y1="718.5" x2="929" y2="718.5" stroke="#ffffff"/>
<line x1="928.5" y1="677" x2="928.5" y2="725" stroke="#ffffff"/>
<line x1="970.5" y1="677" x2="970.5" y2="725" stroke="#ffffff"/>
<line x1="868.5" y1="677" x2="868.5" y2="701" stroke="#ffffff"/>
<line x1="877.5" y1="677" x2="877.5" y2="701" stroke="#ffffff"/>
<line x1="885.5" y1="677" x2="885.5" y2="701" stroke="#ffffff"/>
<line x1="904.5" y1="677" x2="904.5" y2="701" stroke="#ffffff"/>
<line x1="914.5" y1="677" x2="914.5" y2="701" stroke="#ffffff"/>
<line x1="870.5" y1="700" x2="870.5" y2="725" stroke="#ffffff"/>
<line x1="880.5" y1="700" x2="880.5" y2="725" stroke="#ffffff"/>
<line x1="895.5" y1="700" x2="895.5" y2="725" stroke="#ffffff"/>
<line x1="904.5" y1="700" x2="904.5" y2="725" stroke="#ffffff"/>
<line x1="914.5" y1="700" x2="914.5" y2="725" stroke="#ffffff"/>
<line x1="928" y1="700.5" x2="971" y2="700.5" stroke="#ffffff"/>
<line x1="928" y1="706.5" x2="971" y2="706.5" stroke="#ffffff"/>
<line x1="928" y1="716.5" x2="971" y2="716.5" stroke="#ffffff"/>
<line x1="950.5" y1="700" x2="950.5" y2="717" stroke="#ffffff"/>
<line x1="960.5" y1="700" x2="960.5" y2="717" stroke="#ffffff"/>
<line x1="934.5" y1="706" x2="934.5" y2="717" stroke="#ffffff"/>
<line x1="939.5" y1="706" x2="939.5" y2="717" stroke="#ffffff"/>
<line x1="944.5" y1="706" x2="944.5" y2="717" stroke="#ffffff"/>
<line x1="970" y1="691.5" x2="1014" y2="691.5" stroke="#ffffff"/>
<line x1="970" y1="708.5" x2="1014" y2="708.5" stroke="#ffffff"/>
<text x="948" y="691" fill="#ff00ff" font-size="6" text-anchor="middle" font-weight="bold">装配图</text>
<text x="989" y="687" fill="#ff00ff" font-size="8" text-anchor="middle">Z</text>
<text x="939" y="705.5" fill="#ff00ff" font-size="4.5" text-anchor="middle" font-weight="bold" stroke="#ff00ff" stroke-width="0.3">阶段标记</text>
<text x="955" y="705.5" fill="#ff00ff" font-size="4.5" text-anchor="middle" font-weight="bold" stroke="#ff00ff" stroke-width="0.3">重量</text>
<text x="965" y="705.5" fill="#ff00ff" font-size="4.5" text-anchor="middle" font-weight="bold" stroke="#ff00ff" stroke-width="0.3">比例</text>
<text x="955" y="714" fill="#ff00ff" font-size="5" text-anchor="middle" stroke="#ff00ff" stroke-width="0.3">1</text>
<text x="965" y="714" fill="#ff00ff" font-size="5" text-anchor="middle" font-weight="bold" stroke="#ff00ff" stroke-width="0.3">1:2</text>
<text x="939" y="722.5" fill="#ff00ff" font-size="4.5" text-anchor="middle" font-weight="bold" stroke="#ff00ff" stroke-width="0.3">共14张</text>
<text x="959" y="722.5" fill="#ff00ff" font-size="4.5" text-anchor="middle" font-weight="bold" stroke="#ff00ff" stroke-width="0.3">第1张</text>
<text x="972" y="716.5" fill="#ff00ff" font-size="5.5" font-weight="bold" stroke="#ff00ff" stroke-width="0.3" textLength="36" lengthAdjust="spacingAndGlyphs">河北科技师范学院</text>
<text x="861.5" y="699.8" fill="#ff00ff" font-size="4.5" font-weight="bold" stroke="#ff00ff" stroke-width="0.3">标记</text>
<text x="869" y="699.8" fill="#ff00ff" font-size="4.5" font-weight="bold" stroke="#ff00ff" stroke-width="0.3">处数</text>
<text x="878" y="699.8" fill="#ff00ff" font-size="4.5" font-weight="bold" stroke="#ff00ff" stroke-width="0.3">分区</text>
<text x="886" y="699.8" fill="#ff00ff" font-size="4.5" font-weight="bold" stroke="#ff00ff" stroke-width="0.3" textLength="18" lengthAdjust="spacingAndGlyphs">更改文件号</text>
<text x="905" y="699.8" fill="#ff00ff" font-size="4.5" font-weight="bold" stroke="#ff00ff" stroke-width="0.3">签名</text>
<text x="915" y="699.8" fill="#ff00ff" font-size="4.5" font-weight="bold" stroke="#ff00ff" stroke-width="0.3">年月日</text>
<text x="861.5" y="705.8" fill="#ff00ff" font-size="4.5" font-weight="bold" stroke="#ff00ff" stroke-width="0.3">设计</text>
<text x="871" y="705.8" fill="#ff00ff" font-size="4.5" font-weight="bold" stroke="#ff00ff" stroke-width="0.3" textLength="32" lengthAdjust="spacingAndGlyphs">张三2014.05标准化</text>
<text x="861.5" y="717.6" fill="#ff00ff" font-size="4.5" font-weight="bold" stroke="#ff00ff" stroke-width="0.3">审核</text>
<text x="861.5" y="723.4" fill="#ff00ff" font-size="4.5" font-weight="bold" stroke="#ff00ff" stroke-width="0.3">工艺</text>
<text x="896" y="723.4" fill="#ff00ff" font-size="4.5" font-weight="bold" stroke="#ff00ff" stroke-width="0.3">批准</text>
</svg>
<div id="tb">
<div class="dd" style="left:0;width:61px"><span style="left:-3px">0</span><i style="left:50px"></i></div>
<div class="sep" style="left:64px"></div>
<svg style="left:71px;top:0" width="14" height="8" viewBox="0 0 14 8"><rect x="0" y="0" width="14" height="7.5" fill="#5f86b8"/><rect x="1" y="4" width="3" height="2" fill="#dfe8f4"/><rect x="5" y="4" width="3" height="2" fill="#dfe8f4"/><rect x="9" y="4" width="4" height="2" fill="#dfe8f4"/><path d="M4 2L9 0" stroke="#222" stroke-width="2"/></svg>
<div class="dd" style="left:92px;width:99px"><span style="left:5px">Standard</span><i style="left:86px"></i></div>
<div class="sep" style="left:194px"></div><div class="sep" style="left:200px;background:#b5b5b5"></div><div class="sep" style="left:204px;background:#b5b5b5"></div>
<div class="dd" style="left:209px;width:149px"><b style="position:absolute;left:5px;top:-6px;width:9px;height:9px;background:#ff00ff;border:1px solid #000"></b><span style="left:20px">ByLayer</span><i style="left:137px"></i></div>
<div class="sep" style="left:361px"></div>
<div class="dd" style="left:366px;width:157px"><div class="ln" style="left:4px;width:60px"></div><span style="left:69px">ByLayer</span><i style="left:147px"></i></div>
<div class="sep" style="left:527px"></div>
<div class="dd" style="left:532px;width:124px"><div class="ln" style="left:4px;width:35px"></div><span style="left:44px">ByLayer</span><i style="left:112px"></i></div>
<div class="sep" style="left:659px"></div>
<div class="dd" style="left:663px;width:118px;background:#fafafa"><div style="position:absolute;left:1px;top:0;width:99px;height:8px;background:#e9e9e9"></div><span style="left:8px;top:-7px;color:#8c8c8c;letter-spacing:0;font-size:12px">随颜色</span><i style="left:106px;border-top-color:#9a9a9a"></i></div>
<div class="sep" style="left:785px;background:#c0c0c0"></div>
<div class="sh1"></div><div class="sh2"></div>
</div>
<div id="bb"><div style="position:absolute;left:6px;top:0;width:2px;height:2px;background:#000"></div><div style="position:absolute;left:22px;top:0;width:2px;height:2px;background:#000"></div></div>
</body></html>
